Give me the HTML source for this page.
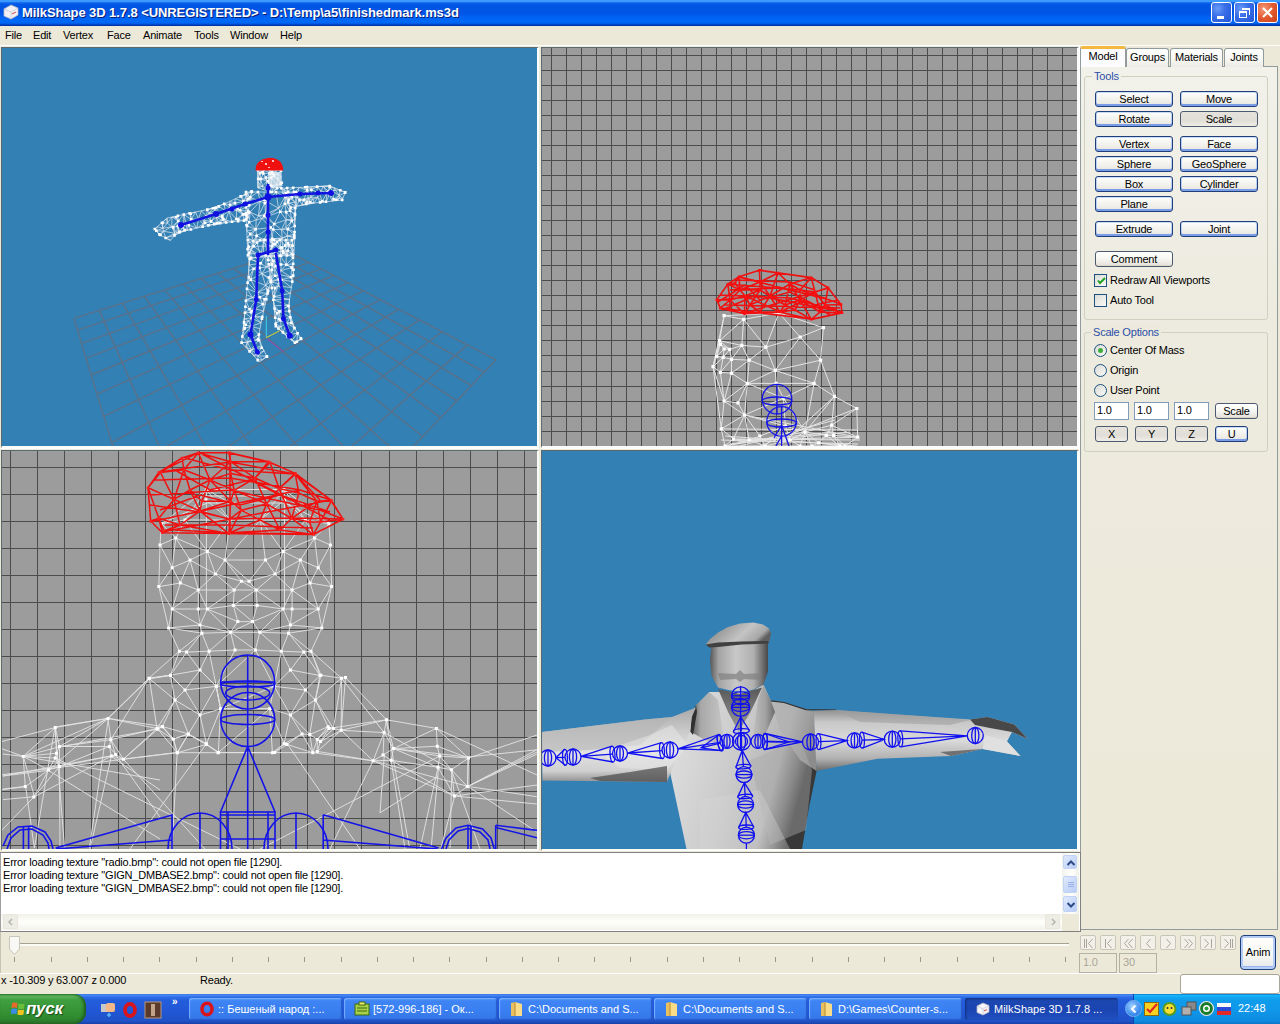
<!DOCTYPE html>
<html><head><meta charset="utf-8">
<style>
*{margin:0;padding:0;box-sizing:border-box}
html,body{width:1280px;height:1024px;overflow:hidden;background:#ECE9D8;font-family:"Liberation Sans",sans-serif;font-size:11px;color:#000;letter-spacing:-0.2px}
.a{position:absolute}
#title{left:0;top:0;width:1280px;height:26px;background:linear-gradient(to bottom,#3D9CFF 0,#3A98FF 1.5px,#1C70F0 2.5px,#0058E6 4px,#0054E3 8px,#0056E8 14px,#0062F2 17px,#006AF8 22px,#0058E0 24px,#0036B4 25px,#0030A8 26px)}
#title .t{left:22px;top:5px;color:#fff;font-weight:bold;font-size:13px;letter-spacing:-0.08px;text-shadow:1px 1px 0 #0A1E7A}
.tb{top:2px;width:21px;height:21px;border:1px solid #fff;border-radius:3px;background:radial-gradient(circle at 30% 30%,#6A9CF7 0,#3A6FE8 40%,#1F56D8 100%)}
.tb.c{background:radial-gradient(circle at 30% 30%,#F29A7A 0,#E35A30 50%,#C8401C 100%)}
#menu{left:0;top:26px;width:1280px;height:20px;background:#ECE9D8}
#menu span{position:absolute;top:3px}
.vp{position:absolute;overflow:hidden}
.btn{position:absolute;height:16px;border:1px solid #1E3F7A;border-radius:3px;background:linear-gradient(to bottom,#FFFFFF 0,#F4F4F0 40%,#ECEBE6 80%,#D6D0C5 100%);text-align:center;line-height:15px;font-size:11px;box-shadow:inset 0 -2px 0 #7B9CE6,inset 0 1px 0 #CADCF8,inset 1px 0 0 #BCD0F4,inset -1px 0 0 #BCD0F4}
.btn.g{border-color:#4C5A70;background:linear-gradient(to bottom,#E4E2DA 0,#E0DED6 60%,#F0EEE8 100%);box-shadow:none}
.btn.n{border-color:#4C5A70;box-shadow:none;background:linear-gradient(to bottom,#FFFFFF 0,#F6F6F2 50%,#E6E4DC 90%,#D6D0C5 100%)}
.tab{position:absolute;top:48px;height:19px;border:1px solid #919B9C;border-bottom:none;border-radius:3px 3px 0 0;background:linear-gradient(to bottom,#FFFFFF 0,#F6F6F2 60%,#ECEBE5 100%);text-align:center;line-height:17px}
.gb{position:absolute;border:1px solid #D0D0BF;border-radius:3px}
.gbl{position:absolute;background:#F5F4EA;color:#2A4EA8;padding:0 2px}
.chk{position:absolute;width:13px;height:13px;border:1px solid #1C5180;background:linear-gradient(135deg,#DCDCD7 0,#F8F8F6 100%)}
.rad{position:absolute;width:13px;height:13px;border:1px solid #1C5180;border-radius:50%;background:linear-gradient(135deg,#DCDCD7 0,#F8F8F6 100%)}
.lbl{position:absolute}
.edit{position:absolute;border:1px solid #7F9DB9;background:#fff;padding-left:2px;line-height:14px}
</style></head><body>
<div id="title" class="a">
 <svg class="a" style="left:2px;top:3px" width="18" height="18" viewBox="0 0 18 18">
  <path d="M2 6 L9 2 L16 5 L16 12 L9 16 L2 13 Z" fill="#F2F2F6" stroke="#B8B8C8" stroke-width="0.8"/>
  <path d="M2 6 L9 9 L16 5 M9 9 L9 16" fill="none" stroke="#C8C8D8" stroke-width="0.8"/>
  <path d="M10 11 L14 9" stroke="#D06060" stroke-width="1.2"/>
 </svg>
 <div class="a t">MilkShape 3D 1.7.8 &lt;UNREGISTERED&gt; - D:\Temp\a5\finishedmark.ms3d</div>
 <div class="a tb" style="left:1211px"><div class="a" style="left:5px;top:13px;width:7px;height:3px;background:#fff"></div></div>
 <div class="a tb" style="left:1234px"><div class="a" style="left:4px;top:8px;width:8px;height:7px;border:1px solid #fff;border-top-width:2px"></div><div class="a" style="left:7px;top:5px;width:8px;height:7px;border:1px solid #fff;border-top-width:2px;border-left:none;border-bottom:none"></div></div>
 <div class="a tb c" style="left:1257px"><svg class="a" style="left:0;top:0" width="19" height="19"><path d="M5 5 L14 14 M14 5 L5 14" stroke="#fff" stroke-width="2"/></svg></div>
</div>
<div id="menu" class="a">
 <span style="left:5px">File</span><span style="left:33px">Edit</span><span style="left:63px">Vertex</span><span style="left:107px">Face</span><span style="left:143px">Animate</span><span style="left:194px">Tools</span><span style="left:230px">Window</span><span style="left:280px">Help</span>
</div>
<div class="a" style="left:0;top:45px;width:1280px;height:1px;background:#FDFDF8"></div>
<div class="a" style="left:0px;top:45px;width:539px;height:403px;border-top:1px solid #FFFFFF;"></div><div class="a" style="left:1px;top:47px;width:538px;height:401px;border-top:1px solid #5A6A70;border-left:1px solid #5A6A70;border-right:2px solid #FAFCFA;border-bottom:2px solid #FAFCFA"></div><svg class="a" style="left:2px;top:48px;background:#3380B5" width="535" height="398" viewBox="0 0 535 398" shape-rendering="auto"><path d="M285.5 203.4L71.9 270.4M285.5 203.4L494.1 311.8M295.8 208.8L75.5 282.1M273.1 207.3L482.3 324.1M306.9 214.6L79.5 295.3M260.1 211.4L469.3 337.7M318.9 220.8L84.0 310.2M246.2 215.8L454.9 352.8M331.9 227.5L89.1 327.0M231.5 220.4L438.8 369.6M346.0 234.9L95.0 346.2M215.9 225.2L420.7 388.5M361.4 242.9L101.8 368.4M199.3 230.4L400.2 409.9M378.2 251.6L109.7 394.4M181.6 236.0L376.8 434.3M396.8 261.2L119.0 425.1M162.7 241.9L349.9 462.5M417.3 271.9L130.3 461.9M142.4 248.3L318.5 495.2M440.0 283.7L144.0 507.0M120.6 255.1L281.6 533.8M465.5 296.9L161.2 563.5M97.2 262.4L237.3 580.0M494.1 311.8L183.4 636.3M71.9 270.4L183.4 636.3" stroke="#5A7088" stroke-width="1.4" fill="none"/><g transform="translate(-2,-48)"><path d="M251.5 191.4L215.6 207.8L167.2 218.0L154.7 229.0L159.4 234.4L170.3 240.6L176.6 232.8L217.2 223.4L246.9 220.3L251.5 191.4Z" fill="#3380B5"/><path d="M281.2 188.3L329.7 186.0L345.3 192.2L342.2 200.0L306.2 203.9L290.6 207.8L281.2 188.3Z" fill="#3380B5"/><path d="M246.0 192.0L296.0 192.0L295.0 215.0L294.0 255.0L248.0 258.0L246.0 215.0L246.0 192.0Z" fill="#3380B5"/><path d="M257.8 170.0L281.0 170.0L282.0 186.0L272.0 192.0L258.0 188.0L257.8 170.0Z" fill="#3380B5"/><path d="M248.0 240.0L272.0 240.0L272.0 278.0L268.2 290.8L261.9 318.7L258.0 339.0L267.0 356.7L259.3 361.8L241.6 342.8L244.0 322.5L246.0 299.6L249.8 259.0L248.0 240.0Z" fill="#3380B5"/><path d="M268.0 240.0L292.3 240.0L293.6 273.0L288.5 306.0L291.0 322.5L301.2 339.0L294.9 342.8L275.8 326.3L274.6 308.5L270.8 280.6L268.0 260.0L268.0 240.0Z" fill="#3380B5"/><path d="M202.6 226.8L205.0 222.9M172.0 217.0L171.7 226.8M183.8 214.5L183.8 224.8M248.3 211.3L247.5 215.2M247.4 217.2L248.3 211.3M186.3 224.2L187.1 230.2M239.9 210.3L237.5 208.5M208.8 213.4L215.2 210.2M238.3 219.6L236.4 219.0M195.5 212.0L190.7 213.7M226.2 222.5L232.1 221.8M248.3 211.3L246.1 214.2M198.5 218.9L203.1 224.0M240.6 196.4L243.5 201.4M230.1 204.7L235.0 203.1M179.2 232.2L179.6 231.9M225.2 210.5L222.3 215.9M179.6 231.9L182.8 227.3M218.0 221.7L215.7 223.6M215.6 207.8L218.8 206.4M176.6 232.8L177.8 226.1M173.2 227.4L174.9 233.3M157.4 226.6L162.8 228.3M172.0 217.0L167.4 223.1M232.1 221.8L238.1 221.2M226.2 222.5L225.9 220.0M201.4 210.8L195.5 212.0M218.8 206.4L215.6 213.4M203.9 220.3L203.1 224.0M160.5 235.0L163.5 231.2M195.5 212.0L198.5 218.9M222.3 215.9L216.5 217.1M228.9 211.1L225.9 220.0M249.3 205.3L239.9 210.3M224.2 203.9L218.8 206.4M198.5 218.9L206.6 216.2M190.9 229.5L187.1 230.2M170.3 240.6L170.8 240.0M215.3 215.7L215.6 213.4M177.8 226.1L183.8 224.8M226.2 222.5L221.6 220.2M218.8 206.4L213.1 208.3M203.9 220.3L206.6 216.2M172.0 217.0L178.2 221.0M218.0 221.7L216.5 217.1M244.2 214.3L239.9 210.3M247.4 217.2L246.2 215.6M238.1 221.2L244.1 220.6M229.5 207.6L225.2 210.5M186.3 224.2L182.8 227.3M228.9 211.1L222.3 215.9M190.7 213.7L191.2 219.4M208.4 225.4L211.1 221.4M214.3 224.1L220.2 223.1M224.2 203.9L207.3 209.6M174.5 235.4L185.1 230.8M167.2 218.0L167.4 223.1M154.7 229.0L157.4 226.6M183.8 224.8L186.3 224.2M229.7 201.4L230.1 204.7M244.2 214.3L242.8 214.5M243.5 201.4L242.4 195.7M228.9 211.1L236.4 219.0M187.1 230.2L182.8 227.3M218.8 206.4L215.2 210.2M161.9 222.7L162.5 222.9M213.1 208.3L207.3 209.6M238.1 221.2L236.4 219.0M236.6 210.4L229.5 207.6M246.9 220.3L244.1 220.6M188.8 225.1L186.3 224.2M186.3 224.2L191.2 219.4M247.5 215.2L246.2 215.6M190.9 229.5L188.8 225.1M215.2 210.2L215.6 213.4M226.2 222.5L223.3 219.5M235.1 198.9L229.7 201.4M242.8 214.5L236.4 219.0M177.9 215.7L172.0 217.0M163.5 231.2L171.7 226.8M235.1 198.9L235.0 203.1M159.4 234.4L156.3 230.8M162.5 222.9L162.8 228.3M242.8 214.5L238.3 219.6M229.7 201.4L224.2 203.9M248.3 211.3L249.3 205.3M195.5 212.0L191.2 219.4M228.9 211.1L236.6 210.4M222.3 215.9L215.6 213.4M251.5 191.4L246.6 195.6M242.4 195.7L246.6 195.6M224.2 203.9L230.1 204.7M215.7 223.6L216.5 217.1M165.7 238.0L174.5 235.4M249.3 205.3L250.2 199.4M236.6 210.4L239.9 210.3M224.2 203.9L225.2 210.5M178.2 221.0L176.1 217.3M244.1 220.6L242.8 214.5M183.8 214.5L191.2 219.4M248.3 211.3L239.9 210.3M225.9 220.0L222.2 217.0M174.5 235.4L174.9 233.3M179.2 232.2L177.8 226.1M172.0 217.0L176.1 217.3M247.4 217.2L247.5 215.2M221.6 220.2L223.3 219.5M196.8 228.1L188.8 225.1M195.5 212.0L189.6 213.3M208.8 213.4L206.6 216.2M166.4 218.7L161.9 222.7M246.0 193.9L242.4 195.7M236.6 210.4L242.8 214.5M202.6 226.8L203.1 224.0M156.3 230.8L163.5 231.2M208.4 225.4L205.0 222.9M222.3 215.9L222.2 217.0M211.1 221.4L206.6 216.2M177.8 226.1L182.8 227.3M242.8 214.5L246.2 215.6M207.3 209.6L208.8 213.4M189.6 213.3L183.8 214.5M188.8 225.1L187.1 230.2M176.6 232.8L174.5 235.4M173.2 227.4L177.8 226.1M217.2 223.4L220.2 223.1M203.9 220.3L211.1 221.4M165.7 238.0L163.5 231.2M201.4 210.8L198.5 218.9M185.1 230.8L179.6 231.9M222.2 217.0L216.5 217.1M243.5 201.4L246.6 195.6M215.6 207.8L213.1 208.3M205.0 222.9L203.1 224.0M185.1 230.8L184.6 230.3M170.8 240.0L174.5 235.4M161.9 222.7L157.4 226.6M167.2 218.0L166.4 218.7M247.5 215.2L246.1 214.2M185.1 230.8L187.1 230.2M224.2 203.9L229.5 207.6M157.4 226.6L156.3 230.8M230.1 204.7L229.5 207.6M183.8 214.5L177.9 215.7M232.1 221.8L228.9 211.1M174.5 235.4L179.2 232.2M225.9 220.0L223.3 219.5M196.8 228.1L198.5 218.9M173.2 227.4L171.7 226.8M238.1 221.2L238.3 219.6M207.3 209.6L201.4 210.8M183.8 224.8L182.8 227.3M215.6 207.8L215.2 210.2M166.4 218.7L162.5 222.9M208.4 225.4L220.2 223.1M211.1 221.4L215.7 223.6M251.5 191.4L250.2 199.4M244.2 214.3L246.2 215.6M165.7 238.0L174.9 233.3M179.6 231.9L184.6 230.3M243.5 201.4L239.9 210.3M167.4 223.1L162.8 228.3M244.1 220.6L238.3 219.6M217.2 223.4L218.0 221.7M236.6 210.4L236.4 219.0M160.5 235.0L165.7 238.0M221.6 220.2L216.5 217.1M213.1 208.3L215.2 210.2M225.2 210.5L215.6 213.4M207.3 209.6L206.6 216.2M189.6 213.3L190.7 213.7M246.0 193.9L246.6 195.6M183.8 214.5L178.2 221.0M246.9 220.3L247.4 217.2M211.1 221.4L216.5 217.1M235.1 198.9L243.5 201.4M203.9 220.3L205.0 222.9M171.7 226.8L174.9 233.3M165.7 238.0L170.8 240.0M183.8 214.5L186.3 224.2M225.9 220.0L222.3 215.9M214.3 224.1L215.7 223.6M228.9 211.1L225.2 210.5M173.2 227.4L178.2 221.0M208.8 213.4L211.1 221.4M176.6 232.8L174.9 233.3M159.4 234.4L160.5 235.0M215.6 213.4L216.5 217.1M156.3 230.8L162.8 228.3M208.8 213.4L215.3 215.7M236.6 210.4L237.5 208.5M232.1 221.8L225.9 220.0M166.4 218.7L167.4 223.1M220.2 223.1L218.0 221.7M170.3 240.6L165.7 238.0M211.1 221.4L215.3 215.7M161.9 222.7L162.8 228.3M220.2 223.1L221.6 220.2M177.9 215.7L178.2 221.0M244.1 220.6L246.2 215.6M178.2 221.0L183.8 224.8M154.7 229.0L159.4 234.4M198.5 218.9L191.2 219.4M196.8 228.1L191.2 219.4M196.8 228.1L202.6 226.8M235.0 203.1L237.5 208.5M229.5 207.6L237.5 208.5M217.2 223.4L214.3 224.1M218.0 221.7L221.6 220.2M201.4 210.8L206.6 216.2M243.5 201.4L235.0 203.1M196.8 228.1L203.1 224.0M213.1 208.3L208.8 213.4M202.6 226.8L208.4 225.4M249.3 205.3L243.5 201.4M248.3 211.3L244.2 214.3M176.6 232.8L173.2 227.4M171.7 226.8L162.8 228.3M184.6 230.3L187.1 230.2M240.6 196.4L242.4 195.7M214.3 224.1L211.1 221.4M167.2 218.0L172.0 217.0M218.8 206.4L207.3 209.6M159.4 234.4L163.5 231.2M163.5 231.2L174.9 233.3M232.1 221.8L236.4 219.0M179.2 232.2L185.1 230.8M228.9 211.1L229.5 207.6M244.2 214.3L246.1 214.2M205.0 222.9L211.1 221.4M176.6 232.8L179.2 232.2M223.3 219.5L222.2 217.0M229.5 207.6L235.0 203.1M167.4 223.1L162.5 222.9M208.8 213.4L215.6 213.4M198.5 218.9L203.9 220.3M246.0 193.9L240.6 196.4M154.7 229.0L156.3 230.8M251.5 191.4L246.0 193.9M208.4 225.4L214.3 224.1M178.2 221.0L177.8 226.1M215.3 215.7L216.5 217.1M229.7 201.4L235.0 203.1M185.1 230.8L190.9 229.5M244.1 220.6L247.4 217.2M217.2 223.4L215.7 223.6M188.8 225.1L191.2 219.4M250.2 199.4L243.5 201.4M167.4 223.1L171.7 226.8M220.2 223.1L226.2 222.5M189.6 213.3L191.2 219.4M221.6 220.2L222.2 217.0M190.9 229.5L196.8 228.1M240.6 196.4L235.1 198.9M177.9 215.7L176.1 217.3M250.2 199.4L246.6 195.6M163.5 231.2L162.8 228.3M177.8 226.1L179.6 231.9M243.5 201.4L237.5 208.5M208.4 225.4L226.2 222.5M246.1 214.2L246.2 215.6M178.2 221.0L171.7 226.8M242.8 214.5L239.9 210.3M184.6 230.3L182.8 227.3M218.8 206.4L225.2 210.5" stroke="#E8ECF0" stroke-width="0.8" fill="none" opacity="0.85"/><path d="M214.3 206.5h2.6v2.6h-2.6zM153.4 227.7h2.6v2.6h-2.6zM158.1 233.1h2.6v2.6h-2.6zM215.9 222.1h2.6v2.6h-2.6zM250.2 190.1h2.6v2.6h-2.6zM244.7 192.6h2.6v2.6h-2.6zM239.3 195.1h2.6v2.6h-2.6zM222.9 202.6h2.6v2.6h-2.6zM217.5 205.1h2.6v2.6h-2.6zM211.8 207.0h2.6v2.6h-2.6zM206.0 208.3h2.6v2.6h-2.6zM188.3 212.0h2.6v2.6h-2.6zM182.5 213.2h2.6v2.6h-2.6zM176.6 214.4h2.6v2.6h-2.6zM160.6 221.4h2.6v2.6h-2.6zM155.0 229.5h2.6v2.6h-2.6zM159.2 233.7h2.6v2.6h-2.6zM164.4 236.7h2.6v2.6h-2.6zM173.2 234.1h2.6v2.6h-2.6zM177.9 230.9h2.6v2.6h-2.6zM189.6 228.2h2.6v2.6h-2.6zM201.3 225.5h2.6v2.6h-2.6zM207.1 224.1h2.6v2.6h-2.6zM213.0 222.8h2.6v2.6h-2.6zM218.9 221.8h2.6v2.6h-2.6zM224.9 221.2h2.6v2.6h-2.6zM230.8 220.5h2.6v2.6h-2.6zM236.8 219.9h2.6v2.6h-2.6zM242.8 219.3h2.6v2.6h-2.6zM246.1 215.9h2.6v2.6h-2.6zM247.0 210.0h2.6v2.6h-2.6zM248.0 204.0h2.6v2.6h-2.6zM242.9 213.0h2.6v2.6h-2.6zM203.7 221.6h2.6v2.6h-2.6zM241.5 213.2h2.6v2.6h-2.6zM228.8 203.4h2.6v2.6h-2.6zM171.9 226.1h2.6v2.6h-2.6zM176.9 219.7h2.6v2.6h-2.6zM189.4 212.4h2.6v2.6h-2.6zM176.5 224.8h2.6v2.6h-2.6zM178.3 230.6h2.6v2.6h-2.6zM242.2 200.1h2.6v2.6h-2.6zM187.5 223.8h2.6v2.6h-2.6zM237.0 218.3h2.6v2.6h-2.6zM209.8 220.1h2.6v2.6h-2.6zM161.2 221.6h2.6v2.6h-2.6zM221.0 214.6h2.6v2.6h-2.6zM182.5 223.5h2.6v2.6h-2.6zM238.6 209.0h2.6v2.6h-2.6zM222.0 218.2h2.6v2.6h-2.6zM183.3 229.0h2.6v2.6h-2.6zM233.7 201.8h2.6v2.6h-2.6zM214.3 212.1h2.6v2.6h-2.6zM220.9 215.7h2.6v2.6h-2.6zM189.9 218.1h2.6v2.6h-2.6zM244.8 212.9h2.6v2.6h-2.6zM236.2 207.2h2.6v2.6h-2.6zM174.8 216.0h2.6v2.6h-2.6zM181.5 226.0h2.6v2.6h-2.6zM235.1 217.7h2.6v2.6h-2.6zM205.3 214.9h2.6v2.6h-2.6z" fill="#FFFFFF"/><path d="M319.5 194.0L317.1 192.2M305.2 187.2L307.2 190.3M308.1 203.7L310.3 202.1M317.7 197.6L322.4 201.3M323.2 186.3L321.2 191.1M339.3 198.0L339.2 195.4M321.2 191.1L317.1 192.2M293.2 187.7L299.2 187.4M314.1 203.0L302.3 204.9M311.2 186.9L329.1 186.0M290.6 207.8L288.0 202.4M320.1 202.4L317.7 197.6M285.7 193.4L283.9 189.4M306.2 203.9L307.2 201.8M317.2 186.6L311.4 189.7M329.7 186.0L334.8 188.0M334.8 188.0L335.3 190.0M293.2 187.7L293.7 194.2M339.2 195.4L333.6 199.2M302.3 204.9L302.9 200.4M311.1 197.2L317.1 192.2M329.7 186.0L329.9 187.0M299.2 187.4L305.2 187.2M281.2 188.3L287.2 188.0M332.8 191.6L328.6 191.6M296.4 206.3L296.8 197.4M306.2 203.9L304.0 199.9M329.1 186.0L329.9 187.0M334.8 188.0L340.3 190.2M338.0 200.5L339.3 198.0M305.2 187.2L306.9 187.1M308.8 199.1L310.3 202.1M293.7 194.2L287.5 191.5M302.9 200.4L296.8 197.4M306.2 203.9L302.3 204.9M323.2 186.3L327.1 192.5M306.2 203.9L302.9 200.4M340.3 190.2L345.1 192.8M336.4 199.7L339.3 198.0M311.1 197.2L307.2 190.3M307.2 190.3L296.8 197.4M299.5 200.3L296.8 197.4M311.1 197.2L311.4 189.7M317.2 186.6L323.2 186.3M288.0 202.4L288.6 199.6M320.1 202.4L314.1 203.0M342.2 200.0L338.0 200.5M287.5 191.5L283.9 189.4M323.2 186.3L329.1 186.0M338.0 200.5L336.4 199.7M306.9 187.1L311.4 189.7M322.4 201.3L319.5 194.0M336.4 199.7L339.2 195.4M311.1 197.2L308.2 197.5M299.2 187.4L296.8 197.4M281.2 188.3L283.9 189.4M307.2 201.8L304.0 199.9M285.4 197.0L285.7 193.4M314.1 203.0L308.1 203.7M308.8 199.1L307.1 199.1M314.1 203.0L310.3 202.1M285.7 193.4L287.5 191.5M291.8 197.2L296.8 197.4M317.2 186.6L321.2 191.1M326.0 201.8L322.4 201.3M332.8 191.6L339.2 195.4M338.0 200.5L332.0 201.1M329.7 186.0L329.1 186.0M308.1 203.7L302.3 204.9M319.5 194.0L327.1 192.5M336.4 199.7L333.6 199.2M327.1 192.5L329.6 194.5M332.0 201.1L326.0 201.8M311.2 186.9L311.4 189.7M323.2 186.3L328.6 191.6M304.0 199.9L296.8 197.4M314.1 203.0L296.4 206.3M328.6 191.6L327.1 192.5M308.8 199.1L307.2 201.8M291.8 197.2L288.6 199.6M332.8 191.6L333.6 199.2M314.1 203.0L317.7 197.6M307.2 190.3L304.0 199.9M311.1 197.2L308.8 199.1M332.0 201.1L329.6 194.5M302.3 204.9L296.4 206.3M293.2 187.7L287.5 191.5M299.2 187.4L293.7 194.2M296.4 206.3L290.6 207.8M345.1 192.8L339.2 195.4M326.0 201.8L320.1 202.4M308.1 203.7L307.2 201.8M285.4 197.0L291.8 197.2M328.6 191.6L329.9 187.0M291.8 197.2L293.7 194.2M335.3 190.0L339.2 195.4M306.2 203.9L308.1 203.7M302.3 204.9L299.5 200.3M342.8 198.4L339.3 198.0M345.1 192.8L342.8 198.4M290.6 207.8L288.0 202.4M287.2 188.0L283.9 189.4M307.1 199.1L307.2 201.8M345.3 192.2L345.1 192.8M307.2 190.3L311.4 189.7M308.8 199.1L313.0 199.3M281.2 188.3L285.4 197.0M329.1 186.0L328.6 191.6M311.2 186.9L306.9 187.1M311.4 189.7L317.1 192.2M342.2 200.0L342.8 198.4M334.8 188.0L332.8 191.6M317.7 197.6L313.0 199.3M310.3 202.1L313.0 199.3M296.4 206.3L299.5 200.3M290.6 207.8L290.6 207.8M288.0 202.4L285.4 197.0M293.7 194.2L296.8 197.4M342.8 198.4L339.2 195.4M307.1 199.1L304.0 199.9M307.2 190.3L308.2 197.5M299.2 187.4L307.2 190.3M311.1 197.2L317.7 197.6M281.2 188.3L285.7 193.4M335.3 190.0L332.8 191.6M317.2 186.6L329.1 186.0M329.6 194.5L333.6 199.2M302.9 200.4L299.5 200.3M321.2 191.1L327.1 192.5M317.7 197.6L319.5 194.0M307.2 190.3L306.9 187.1M320.1 202.4L322.4 201.3M314.1 203.0L313.0 199.3M342.2 200.0L339.3 198.0M304.0 199.9L302.9 200.4M310.3 202.1L307.2 201.8M340.3 190.2L335.3 190.0M317.7 197.6L317.1 192.2M334.8 188.0L329.9 187.0M328.6 191.6L329.6 194.5M322.4 201.3L327.1 192.5M326.0 201.8L327.1 192.5M307.1 199.1L308.2 197.5M296.4 206.3L291.8 197.2M304.0 199.9L308.2 197.5M287.2 188.0L287.5 191.5M305.2 187.2L311.2 186.9M340.3 190.2L339.2 195.4M345.3 192.2L340.3 190.2M288.0 202.4L291.8 197.2M285.4 197.0L288.6 199.6M326.0 201.8L329.6 194.5M317.2 186.6L317.1 192.2M296.4 206.3L288.0 202.4M291.8 197.2L285.7 193.4M311.1 197.2L313.0 199.3M321.2 191.1L319.5 194.0M291.8 197.2L287.5 191.5M332.0 201.1L336.4 199.7M332.8 191.6L329.9 187.0M311.2 186.9L317.2 186.6M332.8 191.6L329.6 194.5M308.8 199.1L308.2 197.5M332.0 201.1L333.6 199.2M287.2 188.0L293.2 187.7" stroke="#E8ECF0" stroke-width="0.8" fill="none" opacity="0.85"/><path d="M279.9 187.0h2.6v2.6h-2.6zM328.4 184.7h2.6v2.6h-2.6zM344.0 190.9h2.6v2.6h-2.6zM340.9 198.7h2.6v2.6h-2.6zM304.9 202.6h2.6v2.6h-2.6zM289.3 206.5h2.6v2.6h-2.6zM285.9 186.7h2.6v2.6h-2.6zM291.9 186.4h2.6v2.6h-2.6zM303.9 185.9h2.6v2.6h-2.6zM315.9 185.3h2.6v2.6h-2.6zM339.0 188.9h2.6v2.6h-2.6zM343.8 191.5h2.6v2.6h-2.6zM324.7 200.5h2.6v2.6h-2.6zM318.8 201.1h2.6v2.6h-2.6zM286.7 201.1h2.6v2.6h-2.6zM284.1 195.7h2.6v2.6h-2.6zM309.0 200.8h2.6v2.6h-2.6zM305.9 189.0h2.6v2.6h-2.6zM290.5 195.9h2.6v2.6h-2.6zM335.1 198.4h2.6v2.6h-2.6zM331.5 190.3h2.6v2.6h-2.6zM305.9 200.5h2.6v2.6h-2.6zM284.4 192.1h2.6v2.6h-2.6zM302.7 198.6h2.6v2.6h-2.6zM321.1 200.0h2.6v2.6h-2.6zM327.3 190.3h2.6v2.6h-2.6zM305.6 185.8h2.6v2.6h-2.6zM292.4 192.9h2.6v2.6h-2.6zM328.6 185.7h2.6v2.6h-2.6zM310.1 188.4h2.6v2.6h-2.6zM298.2 199.0h2.6v2.6h-2.6zM315.8 190.9h2.6v2.6h-2.6zM325.8 191.2h2.6v2.6h-2.6zM328.3 193.2h2.6v2.6h-2.6zM332.3 197.9h2.6v2.6h-2.6zM287.3 198.3h2.6v2.6h-2.6z" fill="#FFFFFF"/><path d="M294.1 250.0L288.7 245.2M247.9 255.1L250.9 249.8M258.0 192.0L264.3 199.7M265.7 214.3L267.0 201.6M274.2 224.0L273.2 229.5M246.8 231.2L247.1 226.0M286.2 196.2L284.8 203.8M258.0 192.0L264.0 192.0M264.3 199.7L267.0 201.6M250.1 212.1L258.4 215.9M281.5 229.6L286.1 219.8M267.4 216.4L264.3 216.0M246.0 213.2L246.0 207.2M246.2 219.2L250.1 212.1M246.2 219.2L249.0 212.4M291.7 220.9L291.7 219.1M255.7 229.2L247.1 226.0M283.3 252.8L282.9 251.3M249.9 197.5L250.2 197.4M282.0 238.7L272.2 238.9M273.3 244.0L272.2 238.9M296.0 192.0L295.8 196.0M246.0 207.2L249.0 212.4M260.1 201.4L258.4 215.9M246.0 207.2L246.0 201.2M281.1 255.8L283.3 252.8M295.0 214.0L294.9 220.0M256.7 235.7L263.9 239.9M246.0 207.2L250.1 212.1M281.5 229.6L287.8 229.1M267.4 216.4L274.2 224.0M278.5 208.2L284.8 203.8M274.2 224.0L265.8 217.6M255.7 229.2L249.1 222.3M295.3 208.0L290.0 210.6M294.0 192.0L295.8 196.0M294.4 238.0L294.4 236.4M264.0 192.0L270.0 192.0M294.0 255.0L294.1 250.0M246.0 192.0L252.0 192.0M258.0 192.0L250.2 197.4M294.4 236.4L287.3 236.0M248.0 258.0L251.1 257.8M256.7 235.7L270.7 227.5M294.7 226.0L291.7 220.9M246.0 215.0L246.2 219.2M284.8 197.0L286.2 196.2M260.1 201.4L264.3 199.7M295.8 196.0L295.6 202.0M250.1 212.1L249.1 222.3M274.2 224.0L280.3 211.7M270.0 192.0L267.0 201.6M287.0 255.5L287.7 250.7M246.0 192.0L249.9 197.5M263.9 239.9L272.1 242.5M250.9 249.8L253.2 241.2M258.4 215.9L264.8 203.1M246.8 231.2L255.7 229.2M246.5 225.2L246.2 219.2M281.5 229.6L287.3 236.0M274.2 224.0L270.7 227.5M256.2 220.0L249.1 222.3M250.9 249.8L260.6 256.0M291.9 254.0L292.7 251.1M269.1 256.6L263.9 239.9M290.0 210.6L284.8 203.8M267.4 216.4L278.5 208.2M295.8 196.0L286.2 196.2M283.3 252.8L287.7 250.7M295.0 214.0L290.0 210.6M295.6 202.0L295.3 208.0M255.7 229.2L256.2 220.0M260.1 201.4L250.2 197.4M272.1 242.5L272.2 238.9M281.5 229.6L273.2 229.5M265.8 217.6L270.7 227.5M295.6 202.0L284.8 203.8M282.0 192.0L288.0 192.0M250.9 249.8L257.0 242.5M261.9 218.4L258.4 215.9M294.4 238.0L294.3 244.0M247.0 237.2L250.2 233.9M294.4 238.0L287.3 236.0M287.0 255.5L291.9 254.0M291.7 220.9L286.1 219.8M292.7 251.1L288.7 245.2M282.0 192.0L284.8 197.0M288.0 192.0L294.0 192.0M282.2 237.8L282.0 238.7M247.1 226.0L249.1 222.3M247.3 243.1L253.2 241.2M247.0 237.2L251.7 234.8M282.9 251.3L288.7 245.2M246.0 201.2L247.8 199.2M263.1 257.0L263.9 239.9M249.9 197.5L247.8 199.2M280.3 211.7L284.8 203.8M261.9 218.4L265.8 217.6M291.7 220.9L287.8 229.1M294.3 244.0L294.1 250.0M291.7 219.1L286.1 219.8M294.3 244.0L288.7 245.2M250.2 233.9L251.7 234.8M294.9 220.0L294.7 226.0M282.2 237.8L287.3 236.0M296.0 192.0L294.0 192.0M295.0 215.0L291.7 219.1M294.7 226.0L287.8 229.1M281.5 229.6L285.9 227.7M258.4 215.9L265.7 214.3M280.3 211.7L286.1 219.8M265.7 214.3L264.8 203.1M264.0 192.0L264.3 199.7M294.7 226.0L294.6 232.0M246.0 207.2L260.1 201.4M246.5 225.2L249.1 222.3M256.7 235.7L255.7 229.2M246.0 213.2L249.0 212.4M287.0 255.5L283.3 252.8M287.8 229.1L293.9 234.3M282.2 237.8L273.2 229.5M261.9 218.4L270.7 227.5M286.2 212.1L291.7 219.1M257.0 242.5L260.6 256.0M288.0 192.0L286.2 196.2M294.9 220.0L291.7 219.1M263.1 257.0L257.1 257.4M278.5 208.2L265.7 214.3M252.0 192.0L250.2 197.4M293.0 255.1L287.0 255.5M274.2 224.0L281.5 229.6M250.9 249.8L254.8 242.1M282.9 251.3L275.2 252.0M269.1 256.6L272.1 242.5M263.9 239.9L257.0 242.5M287.0 255.5L281.1 255.8M294.6 232.0L294.4 238.0M257.1 257.4L251.1 257.8M257.1 257.4L260.6 256.0M294.0 255.0L293.0 255.1M295.3 208.0L295.0 214.0M260.1 201.4L247.8 199.2M248.0 258.0L247.9 255.1M281.1 255.8L275.1 256.2M246.0 192.0L250.2 197.4M282.2 237.8L272.2 238.9M282.0 238.7L288.7 245.2M282.9 251.3L282.0 238.7M281.1 255.8L275.2 252.0M250.1 212.1L256.2 220.0M276.0 192.0L267.0 201.6M269.1 256.6L273.3 244.0M246.0 192.0L247.8 199.2M251.1 257.8L250.9 249.8M294.0 192.0L286.2 196.2M294.3 235.0L293.9 234.3M287.3 236.0L288.7 245.2M269.1 256.6L275.2 252.0M281.1 255.8L282.9 251.3M256.7 235.7L253.2 241.2M295.3 208.0L294.7 226.0M286.2 212.1L284.8 203.8M247.6 249.1L250.9 249.8M273.3 244.0L272.1 242.5M267.0 201.6L264.8 203.1M275.1 256.2L269.1 256.6M295.0 215.0L294.9 220.0M295.6 202.0L286.2 196.2M288.7 245.2L287.7 250.7M246.5 225.2L247.1 226.0M250.1 212.1L249.0 212.4M284.8 197.0L278.5 208.2M294.0 255.0L291.9 254.0M294.6 232.0L294.3 235.0M276.0 192.0L284.8 197.0M269.1 256.6L263.1 257.0M291.7 220.9L285.9 227.7M261.9 218.4L264.3 216.0M294.3 235.0L294.4 236.4M294.6 232.0L293.9 234.3M287.3 236.0L293.9 234.3M287.8 229.1L287.3 236.0M267.4 216.4L265.8 217.6M256.7 235.7L257.0 242.5M264.3 199.7L264.8 203.1M263.9 239.9L260.6 256.0M294.1 250.0L292.7 251.1M286.2 212.1L286.1 219.8M292.7 251.1L287.7 250.7M267.4 216.4L265.7 214.3M276.0 192.0L278.5 208.2M258.4 215.9L264.3 216.0M282.9 251.3L287.7 250.7M273.3 244.0L275.2 252.0M273.2 229.5L270.7 227.5M255.7 229.2L251.7 234.8M246.0 192.0L246.0 201.2M250.1 212.1L260.1 201.4M247.3 243.1L247.0 237.2M261.9 218.4L255.7 229.2M267.4 216.4L280.3 211.7M284.8 197.0L284.8 203.8M247.3 243.1L250.9 249.8M294.6 232.0L294.4 236.4M294.9 220.0L291.7 220.9M270.0 192.0L264.3 199.7M290.0 210.6L291.7 219.1M246.2 219.2L249.1 222.3M253.2 241.2L251.7 234.8M274.2 224.0L286.1 219.8M273.3 244.0L282.9 251.3M247.0 237.2L246.8 231.2M295.0 215.0L290.0 210.6M273.3 244.0L282.0 238.7M264.3 216.0L265.8 217.6M261.9 218.4L256.2 220.0M254.8 242.1L253.2 241.2M246.0 215.0L246.0 213.2M251.1 257.8L247.9 255.1M294.6 232.0L287.8 229.1M250.2 197.4L247.8 199.2M264.3 216.0L265.7 214.3M294.0 255.0L292.7 251.1M282.0 192.0L286.2 196.2M278.5 208.2L267.0 201.6M286.2 212.1L290.0 210.6M258.4 215.9L256.2 220.0M263.9 239.9L272.2 238.9M270.0 192.0L276.0 192.0M280.3 211.7L286.2 212.1M246.8 231.2L246.5 225.2M294.4 236.4L293.9 234.3M282.0 238.7L287.3 236.0M255.7 229.2L270.7 227.5M295.3 208.0L284.8 203.8M263.1 257.0L260.6 256.0M254.8 242.1L257.0 242.5M246.0 215.0L249.0 212.4M285.9 227.7L286.1 219.8M291.9 254.0L287.7 250.7M246.0 207.2L247.8 199.2M247.9 255.1L247.6 249.1M282.2 237.8L281.5 229.6M270.7 227.5L272.2 238.9M258.0 192.0L260.1 201.4M273.2 229.5L272.2 238.9M256.7 235.7L254.8 242.1M263.9 239.9L270.7 227.5M247.0 237.2L253.2 241.2M260.1 201.4L264.8 203.1M246.8 231.2L250.2 233.9M293.0 255.1L291.9 254.0M294.4 238.0L288.7 245.2M295.3 208.0L294.9 220.0M247.6 249.1L247.3 243.1M285.9 227.7L287.8 229.1M257.1 257.4L250.9 249.8M276.0 192.0L282.0 192.0M255.7 229.2L250.2 233.9M295.0 215.0L295.0 214.0M275.1 256.2L275.2 252.0M280.3 211.7L278.5 208.2M256.7 235.7L251.7 234.8M252.0 192.0L258.0 192.0" stroke="#E8ECF0" stroke-width="0.8" fill="none" opacity="0.85"/><path d="M244.7 190.7h2.6v2.6h-2.6zM294.7 190.7h2.6v2.6h-2.6zM293.7 213.7h2.6v2.6h-2.6zM244.7 213.7h2.6v2.6h-2.6zM244.7 190.7h2.6v2.6h-2.6zM250.7 190.7h2.6v2.6h-2.6zM256.7 190.7h2.6v2.6h-2.6zM268.7 190.7h2.6v2.6h-2.6zM274.7 190.7h2.6v2.6h-2.6zM286.7 190.7h2.6v2.6h-2.6zM292.7 190.7h2.6v2.6h-2.6zM294.0 206.7h2.6v2.6h-2.6zM293.7 212.7h2.6v2.6h-2.6zM293.4 224.7h2.6v2.6h-2.6zM293.3 230.7h2.6v2.6h-2.6zM293.1 236.7h2.6v2.6h-2.6zM291.7 253.8h2.6v2.6h-2.6zM285.7 254.2h2.6v2.6h-2.6zM279.8 254.5h2.6v2.6h-2.6zM273.8 254.9h2.6v2.6h-2.6zM255.8 256.1h2.6v2.6h-2.6zM249.8 256.5h2.6v2.6h-2.6zM246.6 253.8h2.6v2.6h-2.6zM246.3 247.8h2.6v2.6h-2.6zM245.2 223.9h2.6v2.6h-2.6zM244.9 217.9h2.6v2.6h-2.6zM244.7 211.9h2.6v2.6h-2.6zM244.7 205.9h2.6v2.6h-2.6zM282.0 251.5h2.6v2.6h-2.6zM248.6 196.2h2.6v2.6h-2.6zM272.9 222.7h2.6v2.6h-2.6zM279.0 210.4h2.6v2.6h-2.6zM255.4 234.4h2.6v2.6h-2.6zM262.6 238.6h2.6v2.6h-2.6zM263.0 198.4h2.6v2.6h-2.6zM290.6 252.7h2.6v2.6h-2.6zM290.4 219.6h2.6v2.6h-2.6zM284.9 210.8h2.6v2.6h-2.6zM263.0 214.7h2.6v2.6h-2.6zM254.4 227.9h2.6v2.6h-2.6zM286.5 227.8h2.6v2.6h-2.6zM288.7 209.3h2.6v2.6h-2.6zM245.8 224.7h2.6v2.6h-2.6zM271.9 228.2h2.6v2.6h-2.6zM293.0 233.7h2.6v2.6h-2.6zM272.0 242.7h2.6v2.6h-2.6zM248.9 196.1h2.6v2.6h-2.6zM281.6 250.0h2.6v2.6h-2.6zM248.9 232.6h2.6v2.6h-2.6zM251.9 239.9h2.6v2.6h-2.6zM255.7 241.2h2.6v2.6h-2.6zM264.4 213.0h2.6v2.6h-2.6zM293.1 235.1h2.6v2.6h-2.6zM269.4 226.2h2.6v2.6h-2.6zM287.4 243.9h2.6v2.6h-2.6zM286.4 249.4h2.6v2.6h-2.6zM270.9 237.6h2.6v2.6h-2.6zM265.7 200.3h2.6v2.6h-2.6zM263.5 201.8h2.6v2.6h-2.6zM247.7 211.1h2.6v2.6h-2.6zM283.5 202.5h2.6v2.6h-2.6zM247.8 221.0h2.6v2.6h-2.6zM273.9 250.7h2.6v2.6h-2.6zM246.5 197.9h2.6v2.6h-2.6z" fill="#FFFFFF"/><path d="M258.0 187.5L262.6 186.1M277.7 178.5L280.7 183.8M276.9 184.5L271.1 177.8M274.9 174.0L272.6 173.5M272.0 192.0L274.5 190.5M262.6 186.1L260.8 179.0M275.8 170.0L281.0 170.8M265.8 188.2L267.5 188.4M269.0 191.1L265.8 188.2M260.0 173.1L258.2 178.8M272.0 192.0L273.5 186.9M269.0 191.1L273.5 186.9M282.0 186.0L281.8 182.8M265.8 188.2L270.3 185.7M257.8 170.0L260.0 173.1M265.8 177.5L271.1 177.8M272.1 172.0L269.9 173.1M272.6 173.5L271.1 177.8M268.1 181.3L266.9 181.2M281.4 176.8L278.0 174.3M266.0 178.6L265.8 177.5M262.6 186.1L265.8 188.2M269.0 191.1L263.2 189.5M260.8 179.0L258.2 178.8M266.9 181.2L270.3 185.7M281.0 170.8L281.4 176.8M273.5 186.9L276.9 188.2M281.0 170.0L275.8 170.0M272.1 172.0L272.5 170.4M273.9 175.6L277.7 178.5M258.0 187.5L260.1 184.9M271.1 177.8L269.9 173.1M273.9 175.6L272.6 173.5M266.0 178.6L268.1 181.3M281.8 182.8L280.7 183.8M274.9 174.0L278.0 174.3M262.6 186.1L260.1 184.9M260.0 173.1L260.8 179.0M269.0 191.1L267.5 188.4M263.8 170.0L269.9 173.1M265.8 188.2L266.9 181.2M260.0 173.1L262.6 171.8M275.8 170.0L274.9 174.0M272.1 172.0L273.5 172.3M258.0 187.5L257.9 181.5M274.9 174.0L273.5 172.3M279.6 187.4L274.5 190.5M273.5 172.3L272.6 173.5M273.5 186.9L276.9 184.5M279.6 187.4L276.9 188.2M275.8 170.0L272.5 170.4M281.8 182.8L277.7 178.5M275.8 170.0L278.0 174.3M273.9 175.6L278.0 174.3M269.0 191.1L271.4 185.9M258.0 188.0L262.6 186.1M263.8 170.0L262.6 171.8M275.8 170.0L273.5 172.3M265.8 179.1L265.8 177.5M257.8 170.0L258.2 178.8M272.0 192.0L269.0 191.1M260.8 179.0L265.8 179.1M276.9 184.5L280.7 183.8M279.6 187.4L276.9 184.5M272.5 170.4L273.5 172.3M257.9 181.5L258.2 178.8M263.3 173.5L269.9 173.1M258.0 188.0L263.2 189.5M271.4 185.9L273.5 186.9M260.0 173.1L263.3 173.5M281.0 170.0L281.0 170.8M268.1 181.3L265.8 179.1M268.1 181.3L271.1 177.8M273.9 175.6L271.1 177.8M263.2 189.5L262.6 186.1M257.8 170.0L262.6 171.8M277.7 178.5L278.0 174.3M260.8 179.0L265.8 177.5M258.0 188.0L257.9 181.5M269.8 170.0L269.9 173.1M271.4 185.9L271.1 177.8M257.8 170.0L258.0 188.0M257.9 181.5L260.8 179.0M263.3 173.5L260.8 179.0M281.4 176.8L277.7 178.5M263.3 173.5L262.6 171.8M268.1 181.3L270.3 185.7M263.2 189.5L265.8 188.2M263.8 170.0L263.3 173.5M269.8 170.0L272.1 172.0M271.4 185.9L267.5 188.4M269.8 170.0L272.5 170.4M271.4 185.9L276.9 184.5M257.8 170.0L263.8 170.0M262.6 186.1L266.9 181.2M282.0 186.0L279.6 187.4M265.8 177.5L269.9 173.1M281.0 170.8L278.0 174.3M272.6 173.5L269.9 173.1M265.8 179.1L266.9 181.2M257.9 181.5L260.1 184.9M257.8 170.0L257.9 181.5M279.6 187.4L280.7 183.8M260.1 184.9L260.8 179.0M277.7 178.5L271.1 177.8M271.4 185.9L268.1 181.3M267.5 188.4L270.3 185.7M281.4 176.8L281.8 182.8M263.8 170.0L269.8 170.0M277.7 178.5L276.9 184.5M274.5 190.5L273.5 186.9M276.9 184.5L276.9 188.2M274.5 190.5L276.9 188.2M266.0 178.6L265.8 179.1M258.0 188.0L258.0 187.5M282.0 186.0L280.7 183.8M266.0 178.6L271.1 177.8M260.8 179.0L266.9 181.2M273.9 175.6L274.9 174.0M271.4 185.9L270.3 185.7M263.3 173.5L265.8 177.5M269.8 170.0L275.8 170.0M272.1 172.0L272.6 173.5" stroke="#E8ECF0" stroke-width="0.8" fill="none" opacity="0.85"/><path d="M256.5 168.7h2.6v2.6h-2.6zM270.7 190.7h2.6v2.6h-2.6zM256.5 168.7h2.6v2.6h-2.6zM262.5 168.7h2.6v2.6h-2.6zM268.5 168.7h2.6v2.6h-2.6zM279.7 169.5h2.6v2.6h-2.6zM280.5 181.5h2.6v2.6h-2.6zM267.7 189.8h2.6v2.6h-2.6zM272.6 174.3h2.6v2.6h-2.6zM270.1 184.6h2.6v2.6h-2.6zM258.7 171.8h2.6v2.6h-2.6zM266.2 187.1h2.6v2.6h-2.6zM270.8 170.7h2.6v2.6h-2.6zM262.0 172.2h2.6v2.6h-2.6zM259.5 177.7h2.6v2.6h-2.6zM266.8 180.0h2.6v2.6h-2.6zM256.9 177.5h2.6v2.6h-2.6zM264.5 176.2h2.6v2.6h-2.6zM275.6 186.9h2.6v2.6h-2.6zM271.3 172.2h2.6v2.6h-2.6zM269.8 176.5h2.6v2.6h-2.6zM268.6 171.8h2.6v2.6h-2.6zM269.0 184.4h2.6v2.6h-2.6zM279.4 182.5h2.6v2.6h-2.6zM261.3 170.5h2.6v2.6h-2.6z" fill="#FFFFFF"/><path d="M249.3 264.9L249.2 252.9M258.6 340.2L251.1 349.7M248.9 277.3L253.6 268.7M254.1 316.0L252.4 311.3M243.0 330.6L243.8 324.6M245.5 347.0L246.8 347.1M272.0 246.0L269.1 252.0M249.6 351.4L245.5 347.0M260.0 328.6L250.9 326.5M261.9 318.7L254.1 316.0M243.8 324.6L245.7 324.8M261.9 318.7L261.1 322.7M269.1 279.1L261.9 273.7M266.4 288.4L265.6 285.4M247.6 282.8L250.7 279.6M272.0 240.0L266.0 240.0M258.6 340.2L247.5 342.1M272.0 252.0L272.0 258.0M243.0 330.6L244.9 312.7M259.8 297.2L264.5 299.2M267.6 289.8L266.4 288.4M259.3 361.8L262.4 359.7M260.0 240.0L266.0 240.0M267.6 293.4L259.8 297.2M268.2 290.8L269.2 287.6M257.7 360.1L257.9 355.8M257.6 292.6L266.4 288.4M256.8 353.8L261.7 347.7M249.2 252.9L265.7 255.1M251.7 318.2L248.8 320.9M244.0 322.5L245.7 324.8M272.0 240.0L272.0 246.0M264.1 350.9L256.8 353.8M244.9 312.7L245.4 306.7M272.0 252.0L269.1 252.0M241.6 342.5L242.3 336.5M266.0 240.0L268.4 246.1M241.6 342.8L245.5 347.0M272.0 270.0L266.1 267.0M248.7 270.8L248.9 277.3M244.8 328.4L245.7 324.8M253.7 355.7L256.8 353.8M249.6 309.2L250.9 312.3M265.0 305.1L264.5 299.2M263.7 310.9L254.1 316.0M253.7 246.3L265.7 255.1M249.6 351.4L251.1 349.7M249.8 259.0L249.3 264.9M257.7 360.1L253.7 355.7M263.7 310.9L262.7 304.1M245.4 306.7L245.9 300.7M247.0 288.8L257.6 292.6M261.3 345.6L261.7 347.7M258.0 339.0L258.9 334.5M249.2 252.9L253.7 246.3M248.9 277.3L250.7 279.6M260.8 263.3L259.5 267.9M244.9 312.7L249.6 309.2M246.0 299.6L245.9 300.7M244.9 312.7L250.9 312.3M251.7 318.2L254.1 316.0M268.2 290.8L267.9 291.3M247.5 342.1L250.9 326.5M267.0 356.7L266.8 356.3M272.0 270.0L261.9 273.7M270.9 281.8L265.6 285.4M269.1 279.1L265.6 285.4M245.9 300.7L249.6 309.2M256.8 353.8L251.1 349.7M245.7 324.8L248.8 320.9M272.0 278.0L268.9 277.5M266.1 267.0L271.9 264.6M254.0 240.0L260.0 240.0M241.6 342.5L247.5 342.1M264.1 350.9L257.9 355.8M243.8 324.6L244.3 318.6M249.3 264.9L249.8 258.9M243.0 330.6L244.8 328.4M246.5 294.7L247.0 288.8M245.9 300.7L255.2 301.2M264.1 350.9L261.7 347.7M253.7 355.7L257.9 355.8M247.0 288.8L247.6 282.8M249.6 351.4L246.8 347.1M247.5 342.1L246.8 347.1M253.6 268.7L261.9 273.7M272.0 270.0L268.9 277.5M262.4 359.7L257.9 355.8M244.3 318.6L244.9 312.7M270.9 281.8L269.2 287.6M265.7 255.1L268.4 246.1M255.2 301.2L252.4 297.5M261.9 318.7L262.3 316.8M272.0 258.0L272.0 264.0M258.9 334.5L247.5 342.1M241.6 342.8L247.5 342.1M242.3 336.5L247.5 342.1M269.2 287.6L266.4 288.4M254.8 308.9L252.4 311.3M269.2 287.6L267.6 293.4M261.1 322.7L250.9 326.5M272.0 278.0L272.0 276.0M249.8 258.9L249.2 252.9M250.7 279.6L261.9 273.7M244.0 322.5L244.3 318.6M272.0 264.0L272.0 270.0M247.6 282.8L248.1 276.8M272.0 276.0L268.9 277.5M249.2 252.9L248.7 246.9M249.3 264.9L260.8 263.3M258.0 339.0L247.5 342.1M269.2 287.6L267.6 289.8M267.6 293.4L264.5 299.2M272.0 258.0L265.7 255.1M251.7 318.2L250.9 326.5M272.0 246.0L268.4 246.1M248.1 276.8L248.7 270.8M261.1 322.7L260.0 328.6M267.6 293.4L266.3 299.2M272.0 240.0L268.4 246.1M244.0 322.5L248.8 320.9M248.1 276.8L248.9 277.3M258.9 334.5L261.3 345.6M266.3 299.2L265.0 305.1M249.8 258.9L265.7 255.1M253.7 355.7L251.1 349.7M272.0 270.0L272.0 276.0M272.0 264.0L271.9 264.6M255.2 301.2L262.7 304.1M260.0 328.6L258.9 334.5M251.7 318.2L250.9 312.3M257.9 355.8L256.8 353.8M268.2 290.8L267.6 293.4M260.0 240.0L268.4 246.1M272.0 246.0L272.0 252.0M246.5 294.7L252.4 297.5M259.8 297.2L252.4 297.5M265.0 305.1L263.7 310.9M266.3 299.2L264.5 299.2M267.6 293.4L267.9 291.3M246.0 299.6L252.4 297.5M248.7 270.8L249.3 264.9M254.1 316.0L250.9 312.3M250.9 312.3L252.4 311.3M241.6 342.8L241.6 342.5M248.7 270.8L253.6 268.7M270.9 281.8L269.1 279.1M268.2 290.8L267.6 289.8M259.8 297.2L255.2 301.2M247.6 282.8L257.6 292.6M259.5 267.9L261.9 273.7M249.6 309.2L252.4 311.3M266.1 267.0L265.7 255.1M261.3 345.6L251.1 349.7M254.8 308.9L255.2 301.2M245.5 347.0L247.5 342.1M248.0 240.0L254.0 240.0M263.7 310.9L262.3 316.8M250.9 326.5L248.8 320.9M248.7 270.8L249.2 252.9M266.1 267.0L261.9 273.7M257.6 292.6L265.6 285.4M258.9 334.5L250.9 326.5M242.3 336.5L250.9 326.5M249.6 309.2L254.8 308.9M243.0 330.6L244.3 318.6M267.0 356.7L262.4 359.7M246.8 347.1L251.1 349.7M259.8 297.2L262.7 304.1M248.0 240.0L253.7 246.3M254.8 308.9L262.7 304.1M272.0 278.0L269.1 279.1M257.6 292.6L250.7 279.6M249.8 259.0L260.8 263.3M269.1 252.0L268.4 246.1M264.5 299.2L262.7 304.1M244.0 322.5L243.8 324.6M272.0 264.0L266.1 267.0M244.3 318.6L248.8 320.9M264.1 350.9L266.8 356.3M259.3 361.8L257.7 360.1M265.0 305.1L262.7 304.1M272.0 258.0L269.1 252.0M244.3 318.6L251.7 318.2M266.8 356.3L262.4 359.7M254.1 316.0L254.8 308.9M267.6 293.4L266.4 288.4M262.3 316.8L254.1 316.0M272.0 278.0L270.9 281.8M258.9 334.5L258.6 340.2M272.0 264.0L265.7 255.1M260.0 240.0L253.7 246.3M244.8 328.4L250.9 326.5M248.7 246.9L253.7 246.3M267.6 289.8L267.9 291.3M249.6 309.2L255.2 301.2M259.8 297.2L257.6 292.6M269.1 279.1L268.9 277.5M265.6 285.4L261.9 273.7M268.9 277.5L261.9 273.7M261.1 322.7L251.7 318.2M249.8 259.0L249.8 258.9M247.6 282.8L248.9 277.3M249.8 258.9L260.8 263.3M245.4 306.7L249.6 309.2M262.4 359.7L257.7 360.1M258.0 339.0L258.6 340.2M247.0 288.8L252.4 297.5M245.7 324.8L250.9 326.5M242.3 336.5L244.8 328.4M258.6 340.2L261.3 345.6M245.9 300.7L252.4 297.5M242.3 336.5L243.0 330.6M269.2 287.6L265.6 285.4M253.6 268.7L250.7 279.6M250.7 279.6L265.6 285.4M249.3 264.9L253.6 268.7M247.5 342.1L251.1 349.7M272.0 270.0L271.9 264.6M246.0 299.6L246.5 294.7M253.6 268.7L260.8 263.3M244.9 312.7L251.7 318.2M263.7 310.9L254.8 308.9M261.1 322.7L254.1 316.0M253.6 268.7L259.5 267.9M266.8 356.3L257.9 355.8M248.0 240.0L248.7 246.9M253.7 355.7L249.6 351.4M243.8 324.6L244.8 328.4M253.7 246.3L268.4 246.1M265.7 255.1L260.8 263.3M261.3 345.6L264.1 350.9M267.6 293.4L257.6 292.6M267.9 291.3L266.4 288.4M251.1 349.7L261.7 347.7M269.1 252.0L265.7 255.1M254.0 240.0L253.7 246.3M266.1 267.0L260.8 263.3M257.6 292.6L252.4 297.5M266.1 267.0L259.5 267.9" stroke="#E8ECF0" stroke-width="0.8" fill="none" opacity="0.85"/><path d="M270.7 238.7h2.6v2.6h-2.6zM266.9 289.5h2.6v2.6h-2.6zM260.6 317.4h2.6v2.6h-2.6zM256.7 337.7h2.6v2.6h-2.6zM265.7 355.4h2.6v2.6h-2.6zM240.3 341.5h2.6v2.6h-2.6zM242.7 321.2h2.6v2.6h-2.6zM248.5 257.7h2.6v2.6h-2.6zM246.7 238.7h2.6v2.6h-2.6zM258.7 238.7h2.6v2.6h-2.6zM264.7 238.7h2.6v2.6h-2.6zM270.7 238.7h2.6v2.6h-2.6zM270.7 244.7h2.6v2.6h-2.6zM270.7 262.7h2.6v2.6h-2.6zM270.7 268.7h2.6v2.6h-2.6zM269.6 280.5h2.6v2.6h-2.6zM266.3 292.1h2.6v2.6h-2.6zM265.0 297.9h2.6v2.6h-2.6zM261.0 315.5h2.6v2.6h-2.6zM257.6 333.2h2.6v2.6h-2.6zM257.3 338.9h2.6v2.6h-2.6zM265.5 355.0h2.6v2.6h-2.6zM256.4 358.8h2.6v2.6h-2.6zM248.3 350.1h2.6v2.6h-2.6zM240.3 341.2h2.6v2.6h-2.6zM241.0 335.2h2.6v2.6h-2.6zM243.6 311.4h2.6v2.6h-2.6zM244.1 305.4h2.6v2.6h-2.6zM244.6 299.4h2.6v2.6h-2.6zM245.7 287.5h2.6v2.6h-2.6zM246.3 281.5h2.6v2.6h-2.6zM247.9 251.6h2.6v2.6h-2.6zM247.4 245.6h2.6v2.6h-2.6zM248.3 307.9h2.6v2.6h-2.6zM250.4 316.9h2.6v2.6h-2.6zM258.5 295.9h2.6v2.6h-2.6zM252.8 314.7h2.6v2.6h-2.6zM263.2 297.9h2.6v2.6h-2.6zM253.5 307.6h2.6v2.6h-2.6zM249.6 311.0h2.6v2.6h-2.6zM252.4 245.0h2.6v2.6h-2.6zM261.4 302.8h2.6v2.6h-2.6zM247.6 276.0h2.6v2.6h-2.6zM252.3 267.4h2.6v2.6h-2.6zM266.6 290.0h2.6v2.6h-2.6zM267.8 250.7h2.6v2.6h-2.6zM264.4 253.8h2.6v2.6h-2.6zM249.4 278.3h2.6v2.6h-2.6zM251.1 310.0h2.6v2.6h-2.6zM267.6 276.2h2.6v2.6h-2.6zM255.5 352.5h2.6v2.6h-2.6zM270.6 263.3h2.6v2.6h-2.6zM259.5 262.0h2.6v2.6h-2.6zM267.1 244.8h2.6v2.6h-2.6zM243.5 327.1h2.6v2.6h-2.6zM244.4 323.5h2.6v2.6h-2.6zM249.6 325.2h2.6v2.6h-2.6zM260.4 346.4h2.6v2.6h-2.6zM258.2 266.6h2.6v2.6h-2.6z" fill="#FFFFFF"/><path d="M287.5 336.4L290.3 334.5M271.0 282.0L275.1 288.1M269.4 270.1L275.2 275.7M289.3 311.2L279.4 311.4M271.8 287.9L271.0 282.0M292.8 251.7L289.6 246.0M268.0 240.0L268.0 246.2M274.0 267.0L272.9 261.1M275.2 317.7L273.4 299.8M274.8 311.7L274.2 305.8M292.0 340.3L278.4 328.5M290.2 317.2L294.5 328.1M275.1 288.1L278.4 283.6M292.3 240.0L292.0 240.0M291.0 277.3L281.5 279.7M280.1 274.6L281.5 279.7M292.0 240.0L287.8 243.3M274.2 305.8L273.4 299.8M293.0 257.7L293.2 263.7M281.0 270.6L291.7 267.6M286.3 264.8L281.1 264.5M275.8 326.3L278.4 328.5M286.0 240.0L292.0 240.0M290.2 317.2L286.8 323.1M293.6 273.0L291.0 277.3M291.0 322.5L286.8 323.1M280.1 274.6L291.0 277.3M281.0 270.6L275.6 266.0M292.0 240.0L292.5 245.7M269.4 270.1L268.6 264.2M268.0 258.2L272.9 261.1M280.0 255.8L269.4 255.5M273.4 299.8L272.6 293.9M275.2 317.7L278.8 319.2M289.5 299.4L289.3 311.2M275.6 266.0L274.0 267.0M282.1 247.9L280.0 255.8M274.6 308.5L274.2 305.8M275.2 317.7L277.3 313.3M273.4 260.9L272.9 261.1M275.2 275.7L277.7 275.5M278.7 279.5L277.7 275.5M274.6 308.5L279.4 311.4M287.5 336.4L278.4 328.5M297.6 333.2L290.3 334.5M294.9 342.8L292.0 340.3M297.6 333.2L296.8 341.7M275.6 323.7L275.2 317.7M291.4 287.5L281.5 279.7M292.8 251.7L286.1 254.0M288.5 306.0L288.6 305.3M301.2 339.0L300.8 338.3M281.0 326.7L286.8 323.1M280.0 240.0L280.7 247.5M268.0 252.2L275.2 244.2M277.3 313.3L275.2 310.9M275.8 326.3L281.0 326.7M281.0 270.6L280.1 274.6M293.2 275.6L291.0 277.3M292.5 245.7L292.8 251.7M291.7 267.6L291.5 266.8M279.4 311.4L280.7 320.3M286.3 264.8L291.7 267.6M268.0 260.0L268.0 258.2M274.0 240.0L280.0 240.0M286.3 264.8L286.1 254.0M292.3 281.6L291.4 287.5M274.0 240.0L275.2 244.2M280.7 247.5L275.2 244.2M268.0 258.2L268.0 252.2M285.2 245.6L287.8 243.3M268.0 246.2L275.2 244.2M280.0 240.0L277.1 241.9M278.2 286.0L281.5 279.7M280.0 240.0L286.0 240.0M293.6 273.0L293.5 269.7M269.4 270.1L269.3 264.7M268.0 252.2L268.0 246.2M281.0 270.6L291.0 277.3M282.1 247.9L280.7 247.5M293.0 257.7L286.1 254.0M273.4 260.9L269.4 255.5M278.4 328.5L281.0 326.7M271.0 282.0L278.7 279.5M269.4 270.1L274.0 267.0M270.2 276.0L269.4 270.1M270.8 280.6L275.2 275.7M291.4 287.5L290.4 293.4M288.6 305.3L274.2 305.8M268.0 252.2L280.0 255.8M271.8 287.9L275.1 288.1M291.0 322.5L291.3 323.0M275.6 323.7L280.7 320.3M288.6 305.3L279.4 311.4M292.5 245.7L289.6 246.0M285.2 245.6L286.1 254.0M293.2 263.7L293.5 269.7M290.4 293.4L289.5 299.4M275.2 275.7L278.7 279.5M281.0 270.6L274.0 267.0M270.8 280.6L270.2 276.0M290.2 317.2L279.4 311.4M293.2 263.7L286.3 264.8M289.5 299.4L273.4 299.8M280.7 247.5L280.0 255.8M269.4 255.5L272.9 261.1M286.0 240.0L287.8 243.3M274.8 311.7L273.4 299.8M289.6 246.0L287.8 243.3M270.8 280.6L278.7 279.5M280.7 320.3L278.8 319.2M289.5 299.4L274.1 296.5M292.3 240.0L292.5 245.7M294.5 328.1L297.6 333.2M274.1 296.5L275.1 288.1M292.5 245.7L287.8 243.3M289.5 299.4L288.6 305.3M274.6 308.5L274.8 311.7M273.4 260.9L280.0 255.8M278.7 279.5L281.5 279.7M290.2 317.2L280.7 320.3M288.6 305.3L289.3 311.2M282.1 247.9L286.1 254.0M293.2 275.6L292.3 281.6M294.9 342.8L296.8 341.7M297.6 333.2L300.8 338.3M292.3 281.6L281.5 279.7M268.0 252.2L280.7 247.5M289.6 246.0L286.1 254.0M273.4 299.8L274.1 296.5M292.8 251.7L293.0 257.7M290.4 293.4L278.2 286.0M269.3 264.7L272.9 261.1M289.3 311.2L290.2 317.2M280.0 240.0L285.2 245.6M281.0 270.6L286.3 264.8M294.5 328.1L290.3 334.5M278.4 283.6L281.5 279.7M268.0 258.2L269.4 255.5M293.5 269.7L291.7 267.6M292.3 281.6L291.0 277.3M274.8 311.7L277.3 313.3M301.2 339.0L294.9 342.8M281.0 326.7L280.7 320.3M286.8 323.1L290.3 334.5M272.6 293.9L274.1 296.5M282.9 332.4L290.3 334.5M280.7 320.3L286.8 323.1M289.3 311.2L294.5 328.1M293.2 263.7L291.5 266.8M290.2 317.2L291.3 323.0M268.0 240.0L275.2 244.2M275.2 275.7L274.0 267.0M282.1 247.9L285.2 245.6M274.0 240.0L277.1 241.9M280.7 247.5L277.1 241.9M291.3 323.0L294.5 328.1M286.0 240.0L285.2 245.6M275.6 266.0L281.1 264.5M289.6 246.0L285.2 245.6M274.2 305.8L279.4 311.4M279.4 311.4L278.8 319.2M294.9 342.8L278.4 328.5M272.6 293.9L275.1 288.1M291.0 322.5L290.2 317.2M279.4 311.4L277.3 313.3M278.8 319.2L277.3 313.3M278.2 286.0L278.4 283.6M293.6 273.0L293.2 275.6M280.1 274.6L277.7 275.5M268.6 264.2L272.9 261.1M270.8 280.6L271.0 282.0M288.5 306.0L279.4 311.4M280.0 255.8L281.1 264.5M287.5 336.4L282.9 332.4M291.3 323.0L286.8 323.1M288.6 305.3L273.4 299.8M275.8 326.3L275.6 323.7M269.3 264.7L274.0 267.0M277.1 241.9L275.2 244.2M274.0 267.0L277.7 275.5M290.4 293.4L274.1 296.5M293.0 257.7L286.3 264.8M282.9 332.4L278.4 328.5M268.0 260.0L272.9 261.1M275.6 323.7L278.8 319.2M300.8 338.3L296.8 341.7M274.8 311.7L275.2 310.9M268.0 260.0L268.6 264.2M271.0 282.0L278.4 283.6M292.0 340.3L290.3 334.5M297.6 333.2L292.0 340.3M275.1 288.1L278.2 286.0M288.5 306.0L289.3 311.2M270.2 276.0L275.2 275.7M293.6 273.0L291.7 267.6M294.5 328.1L286.8 323.1M301.2 339.0L296.8 341.7M291.0 277.3L291.7 267.6M274.1 296.5L278.2 286.0M296.8 341.7L292.0 340.3M291.4 287.5L278.2 286.0M275.6 266.0L273.4 260.9M272.6 293.9L271.8 287.9M280.0 255.8L286.1 254.0M282.9 332.4L281.0 326.7M278.7 279.5L278.4 283.6M280.7 247.5L285.2 245.6M273.4 260.9L281.1 264.5M286.3 264.8L280.0 255.8M281.0 270.6L281.1 264.5M281.0 270.6L277.7 275.5M275.6 266.0L272.9 261.1M286.3 264.8L291.5 266.8M268.0 252.2L269.4 255.5M275.2 317.7L274.8 311.7M293.2 263.7L291.7 267.6M282.9 332.4L286.8 323.1M292.0 340.3L287.5 336.4M268.6 264.2L269.3 264.7M279.4 311.4L275.2 310.9M268.0 240.0L274.0 240.0M275.6 323.7L281.0 326.7M274.6 308.5L275.2 310.9M280.1 274.6L278.7 279.5" stroke="#E8ECF0" stroke-width="0.8" fill="none" opacity="0.85"/><path d="M287.2 304.7h2.6v2.6h-2.6zM299.9 337.7h2.6v2.6h-2.6zM293.6 341.5h2.6v2.6h-2.6zM274.5 325.0h2.6v2.6h-2.6zM273.3 307.2h2.6v2.6h-2.6zM269.5 279.3h2.6v2.6h-2.6zM266.7 258.7h2.6v2.6h-2.6zM266.7 238.7h2.6v2.6h-2.6zM272.7 238.7h2.6v2.6h-2.6zM278.7 238.7h2.6v2.6h-2.6zM284.7 238.7h2.6v2.6h-2.6zM290.7 238.7h2.6v2.6h-2.6zM291.2 244.4h2.6v2.6h-2.6zM291.7 256.4h2.6v2.6h-2.6zM291.9 262.4h2.6v2.6h-2.6zM292.2 268.4h2.6v2.6h-2.6zM291.9 274.3h2.6v2.6h-2.6zM291.0 280.3h2.6v2.6h-2.6zM288.0 309.9h2.6v2.6h-2.6zM288.9 315.9h2.6v2.6h-2.6zM290.0 321.7h2.6v2.6h-2.6zM293.2 326.8h2.6v2.6h-2.6zM296.3 331.9h2.6v2.6h-2.6zM299.5 337.0h2.6v2.6h-2.6zM295.5 340.4h2.6v2.6h-2.6zM286.2 335.1h2.6v2.6h-2.6zM281.6 331.1h2.6v2.6h-2.6zM277.1 327.2h2.6v2.6h-2.6zM274.3 322.4h2.6v2.6h-2.6zM273.9 316.4h2.6v2.6h-2.6zM272.1 298.5h2.6v2.6h-2.6zM270.5 286.6h2.6v2.6h-2.6zM269.7 280.7h2.6v2.6h-2.6zM267.3 262.9h2.6v2.6h-2.6zM280.8 246.6h2.6v2.6h-2.6zM274.3 264.7h2.6v2.6h-2.6zM285.0 263.5h2.6v2.6h-2.6zM278.1 310.1h2.6v2.6h-2.6zM279.4 319.0h2.6v2.6h-2.6zM273.9 274.4h2.6v2.6h-2.6zM272.8 295.2h2.6v2.6h-2.6zM272.1 259.6h2.6v2.6h-2.6zM273.8 286.8h2.6v2.6h-2.6zM279.4 246.2h2.6v2.6h-2.6zM289.7 276.0h2.6v2.6h-2.6zM275.8 240.6h2.6v2.6h-2.6zM290.4 266.3h2.6v2.6h-2.6zM278.7 254.5h2.6v2.6h-2.6zM277.4 278.2h2.6v2.6h-2.6zM277.5 317.9h2.6v2.6h-2.6zM283.9 244.3h2.6v2.6h-2.6zM279.8 263.2h2.6v2.6h-2.6zM286.5 242.0h2.6v2.6h-2.6zM276.0 312.0h2.6v2.6h-2.6zM280.2 278.4h2.6v2.6h-2.6zM273.9 242.9h2.6v2.6h-2.6z" fill="#FFFFFF"/><path d="M268 172H281V186L272 188L268 186Z" fill="#F4F6F8" opacity="0.7"/><path d="M255.6 170.5Q255 160 269 157.8Q283 158 283.2 170.5Z" fill="#F01010"/><path d="M261 161h2v1h-2zM265 163h2v2h-2zM272 160h2v2h-2zM268 167h2v1h-2z" fill="#FFC0C0"/><g fill="none" stroke="#1414E0" stroke-width="2.6"><path d="M181 225L216 214L245 204L268 197L300 194L331 193"/><path d="M268 184V255M258 255L276 250M258 255L256.2 299.6L250.5 334.5L257.4 352.3M275.8 252.7L282.2 290.8L283.5 318.7L289.8 335.8"/></g><circle cx="181" cy="225" r="3" fill="#1010E0"/><circle cx="216" cy="214" r="3" fill="#1010E0"/><circle cx="232" cy="209" r="2.5" fill="#1010E0"/><circle cx="245" cy="204" r="2.5" fill="#1010E0"/><circle cx="268" cy="197" r="3.5" fill="#1010E0"/><circle cx="300" cy="194" r="2.5" fill="#1010E0"/><circle cx="318" cy="193" r="2.5" fill="#1010E0"/><circle cx="331" cy="193" r="3" fill="#1010E0"/><circle cx="268" cy="188" r="2.5" fill="#1010E0"/><circle cx="268" cy="215" r="2.5" fill="#1010E0"/><circle cx="268" cy="232" r="2.5" fill="#1010E0"/><circle cx="258" cy="255" r="2.5" fill="#1010E0"/><circle cx="275.8" cy="250" r="2.5" fill="#1010E0"/><circle cx="256.2" cy="299.6" r="2.5" fill="#1010E0"/><circle cx="250.5" cy="334.5" r="3" fill="#1010E0"/><circle cx="257.4" cy="352.3" r="2.5" fill="#1010E0"/><circle cx="282.2" cy="290.8" r="2.5" fill="#1010E0"/><circle cx="283.5" cy="318.7" r="2.5" fill="#1010E0"/><circle cx="289.8" cy="335.8" r="3" fill="#1010E0"/><path d="M266.3 316V337.7" stroke="#40D0E0" stroke-width="1"/><path d="M266.3 337.7L279.6 330.7" stroke="#C8E040" stroke-width="1"/><path d="M267 339L283.5 351.7" stroke="#A040C0" stroke-width="1"/></g></svg><div class="a" style="left:540px;top:45px;width:539px;height:403px;border-top:1px solid #FFFFFF;"></div><div class="a" style="left:541px;top:47px;width:538px;height:401px;border-top:1px solid #5A6A70;border-left:1px solid #5A6A70;border-right:2px solid #FAFCFA;border-bottom:2px solid #FAFCFA"></div><svg class="a" style="left:542px;top:48px;background:#9C9C9C" width="535" height="398" viewBox="0 0 535 398" shape-rendering="auto"><path d="M9.5 0V398M24.5 0V398M39.5 0V398M54.5 0V398M69.5 0V398M84.5 0V398M99.5 0V398M114.5 0V398M129.5 0V398M144.5 0V398M159.5 0V398M174.5 0V398M189.5 0V398M204.5 0V398M219.5 0V398M234.5 0V398M249.5 0V398M264.5 0V398M279.5 0V398M294.5 0V398M309.5 0V398M324.5 0V398M339.5 0V398M355.5 0V398M370.5 0V398M385.5 0V398M400.5 0V398M415.5 0V398M430.5 0V398M445.5 0V398M460.5 0V398M475.5 0V398M490.5 0V398M505.5 0V398M520.5 0V398M0 7.5H535M0 22.5H535M0 37.5H535M0 52.5H535M0 67.5H535M0 82.5H535M0 97.5H535M0 112.5H535M0 127.5H535M0 142.5H535M0 157.5H535M0 172.5H535M0 187.5H535M0 202.5H535M0 217.5H535M0 232.5H535M0 247.5H535M0 262.5H535M0 277.5H535M0 292.5H535M0 307.5H535M0 323.5H535M0 338.5H535M0 353.5H535M0 368.5H535M0 383.5H535" stroke="#4C4C4C" stroke-width="1" fill="none"/><g transform="translate(-542,-48)"><path d="M805.0 432.0L812.0 446.0M818.8 442.8L840.0 446.0M719.5 340.7L729.7 349.4M814.1 383.4L834.5 396.4M765.0 446.0L790.0 440.0M724.1 315.7L719.5 340.7M833.6 435.4L826.2 435.4M744.5 415.0L721.3 428.9M731.5 359.3L720.4 372.3M720.4 344.4L716.7 356.5M741.8 345.4L729.7 349.4M783.5 398.2L805.0 432.0M823.4 327.7L820.6 360.2M831.7 425.2L833.6 435.4M800.0 446.0L790.0 440.0M724.1 349.0L729.7 349.4M831.7 425.2L805.0 432.0M778.9 312.9L800.2 337.0M720.4 372.3L724.1 401.0M724.1 315.7L713.0 366.7M716.7 356.5L713.0 366.7M743.6 319.4L765.9 347.2M738.0 402.9L744.5 415.0M721.3 428.9L725.0 446.0M783.5 398.2L785.4 426.1M747.3 383.4L738.0 402.9M765.0 446.0L800.0 446.0M800.0 446.0L812.0 446.0M724.1 349.0L723.2 357.4M845.0 446.0L840.0 446.0M856.8 408.5L831.7 425.2M713.0 366.7L720.4 372.3M741.8 345.4L749.2 360.2M731.5 373.2L724.1 401.0M723.2 357.4L731.5 359.3M719.5 340.7L741.8 345.4M776.1 383.4L783.5 398.2M765.0 446.0L725.0 446.0M724.1 315.7L778.9 312.9M719.5 340.7L713.0 366.7M749.2 360.2L775.2 370.4M731.5 359.3L749.2 360.2M840.0 446.0L812.0 446.0M785.4 426.1L805.0 432.0M747.3 383.4L744.5 415.0M814.1 383.4L783.5 398.2M724.1 401.0L738.0 402.9M743.6 319.4L719.5 340.7M775.2 370.4L747.3 383.4M744.5 415.0L749.2 440.0M818.8 442.8L826.2 435.4M713.0 366.7L721.3 428.9M749.2 440.0L725.0 446.0M747.3 383.4L776.1 383.4M723.2 357.4L720.4 372.3M719.5 340.7L716.7 356.5M834.5 396.4L805.0 432.0M743.6 319.4L741.8 345.4M775.2 370.4L814.1 383.4M785.4 426.1L765.0 446.0M731.5 359.3L731.5 373.2M856.8 408.5L857.7 437.2M721.3 428.9L733.4 439.0M713.0 366.7L724.1 401.0M834.5 396.4L856.8 408.5M747.3 383.4L724.1 401.0M776.1 383.4L814.1 383.4M831.7 425.2L857.7 437.2M733.4 439.0L749.2 440.0M800.2 337.0L820.6 360.2M724.1 401.0L744.5 415.0M720.4 372.3L731.5 373.2M729.7 349.4L723.2 357.4M778.9 312.9L765.9 347.2M744.5 415.0L785.4 426.1M783.5 398.2L744.5 415.0M834.5 396.4L831.7 425.2M747.3 383.4L783.5 398.2M800.2 337.0L765.9 347.2M719.5 340.7L720.4 344.4M749.2 360.2L731.5 373.2M831.7 425.2L826.2 435.4M724.1 401.0L721.3 428.9M743.6 319.4L778.9 312.9M814.1 383.4L805.0 432.0M785.4 426.1L760.0 436.0M833.6 435.4L840.0 446.0M720.4 344.4L729.7 349.4M820.6 360.2L814.1 383.4M749.2 440.0L765.0 446.0M818.8 442.8L812.0 446.0M765.0 446.0L760.0 436.0M800.2 337.0L775.2 370.4M800.0 446.0L805.0 432.0M778.9 312.9L823.4 327.7M765.9 347.2L775.2 370.4M744.5 415.0L733.4 439.0M785.4 426.1L790.0 440.0M826.2 435.4L805.0 432.0M823.4 327.7L800.2 337.0M731.5 373.2L747.3 383.4M723.2 357.4L713.0 366.7M724.1 349.0L716.7 356.5M733.4 439.0L725.0 446.0M775.2 370.4L776.1 383.4M833.6 435.4L845.0 446.0M826.2 435.4L840.0 446.0M744.5 415.0L760.0 436.0M741.8 345.4L731.5 359.3M820.6 360.2L834.5 396.4M749.2 440.0L760.0 436.0M724.1 315.7L743.6 319.4M765.9 347.2L749.2 360.2M820.6 360.2L775.2 370.4M805.0 432.0L790.0 440.0M818.8 442.8L805.0 432.0M857.7 437.2L845.0 446.0M749.2 360.2L747.3 383.4M833.6 435.4L857.7 437.2M729.7 349.4L731.5 359.3M716.7 356.5L723.2 357.4M720.4 344.4L724.1 349.0M741.8 345.4L765.9 347.2M721 440L858 444M730 444L850 432M740 446L835 420M725 436L857 446M733.4 439L860 440M749.2 440L857.7 437.2M721.3 428.9L857 430M744.5 415L857.7 437.2M738 442L833 432M760 446L856.8 408.5M780 446L834.5 396.4M725 446L805 432" stroke="#E4E4E4" stroke-width="1" fill="none"/><path d="M722.5 314.1h3.2v3.2h-3.2zM742.0 317.8h3.2v3.2h-3.2zM777.3 311.3h3.2v3.2h-3.2zM821.8 326.1h3.2v3.2h-3.2zM798.6 335.4h3.2v3.2h-3.2zM717.9 339.1h3.2v3.2h-3.2zM718.8 342.8h3.2v3.2h-3.2zM740.2 343.8h3.2v3.2h-3.2zM764.3 345.6h3.2v3.2h-3.2zM722.5 347.4h3.2v3.2h-3.2zM728.1 347.8h3.2v3.2h-3.2zM715.1 354.9h3.2v3.2h-3.2zM721.6 355.8h3.2v3.2h-3.2zM729.9 357.7h3.2v3.2h-3.2zM747.6 358.6h3.2v3.2h-3.2zM819.0 358.6h3.2v3.2h-3.2zM711.4 365.1h3.2v3.2h-3.2zM718.8 370.7h3.2v3.2h-3.2zM729.9 371.6h3.2v3.2h-3.2zM773.6 368.8h3.2v3.2h-3.2zM745.7 381.8h3.2v3.2h-3.2zM774.5 381.8h3.2v3.2h-3.2zM812.5 381.8h3.2v3.2h-3.2zM722.5 399.4h3.2v3.2h-3.2zM736.4 401.3h3.2v3.2h-3.2zM781.9 396.6h3.2v3.2h-3.2zM832.9 394.8h3.2v3.2h-3.2zM855.2 406.9h3.2v3.2h-3.2zM742.9 413.4h3.2v3.2h-3.2zM830.1 423.6h3.2v3.2h-3.2zM719.7 427.3h3.2v3.2h-3.2zM731.8 437.4h3.2v3.2h-3.2zM747.6 438.4h3.2v3.2h-3.2zM817.2 441.2h3.2v3.2h-3.2zM832.0 433.8h3.2v3.2h-3.2zM856.1 435.6h3.2v3.2h-3.2zM783.8 424.5h3.2v3.2h-3.2zM824.6 433.8h3.2v3.2h-3.2zM763.4 444.4h3.2v3.2h-3.2zM798.4 444.4h3.2v3.2h-3.2zM843.4 444.4h3.2v3.2h-3.2zM723.4 444.4h3.2v3.2h-3.2zM758.4 434.4h3.2v3.2h-3.2zM803.4 430.4h3.2v3.2h-3.2zM788.4 438.4h3.2v3.2h-3.2zM838.4 444.4h3.2v3.2h-3.2zM810.4 444.4h3.2v3.2h-3.2z" fill="#FFFFFF"/><path d="M815.0 292.0L825.0 305.0M842.0 312.9L811.3 319.4M811.3 319.4L820.0 312.0M740.0 290.0L730.0 300.0M779.8 312.0L760.0 312.0M727.8 284.1L735.0 283.0M828.0 287.8L825.0 305.0M811.3 319.4L779.8 312.0M811.3 319.4L800.0 300.0M727.8 284.1L730.0 300.0M790.0 284.0L800.0 290.0M770.0 296.0L750.0 305.0M785.0 305.0L795.0 310.0M760.0 290.0L745.0 296.0M779.8 312.0L785.0 305.0M790.0 284.0L770.0 296.0M815.0 292.0L820.0 312.0M770.0 296.0L760.0 290.0M825.0 305.0L820.0 312.0M811.3 277.6L815.0 292.0M778.0 273.0L770.0 296.0M811.3 277.6L800.0 290.0M740.0 290.0L760.0 282.0M740.0 290.0L760.0 290.0M815.0 292.0L800.0 300.0M750.0 305.0L760.0 312.0M842.0 312.9L825.0 305.0M739.0 276.7L740.0 290.0M759.4 270.2L811.3 277.6M720.4 308.2L730.0 300.0M759.4 270.2L760.0 282.0M750.0 305.0L745.0 296.0M760.0 282.0L760.0 290.0M800.0 300.0L785.0 305.0M811.3 319.4L795.0 310.0M744.5 313.8L760.0 312.0M739.0 276.7L735.0 283.0M778.0 273.0L790.0 284.0M720.4 308.2L730.0 310.0M779.8 312.0L795.0 310.0M744.5 313.8L745.0 296.0M811.3 277.6L828.0 287.8M760.0 282.0L770.0 296.0M727.8 284.1L739.0 276.7M730.0 300.0L745.0 296.0M800.0 300.0L820.0 312.0M842.0 312.9L820.0 312.0M790.0 284.0L785.0 305.0M770.0 296.0L760.0 312.0M739.0 276.7L759.4 270.2M727.8 284.1L740.0 290.0M759.4 270.2L778.0 273.0M841.0 304.5L825.0 305.0M779.8 312.0L770.0 296.0M716.7 299.9L730.0 300.0M744.5 313.8L730.0 300.0M800.0 300.0L795.0 310.0M739.0 276.7L760.0 282.0M740.0 290.0L745.0 296.0M815.0 292.0L800.0 290.0M778.0 273.0L811.3 277.6M770.0 296.0L785.0 305.0M778.0 273.0L760.0 282.0M716.7 299.9L727.8 284.1M811.3 277.6L790.0 284.0M744.5 313.8L730.0 310.0M828.0 287.8L841.0 304.5M790.0 284.0L800.0 300.0M828.0 287.8L815.0 292.0M750.0 305.0L760.0 290.0M716.7 299.9L720.4 308.2M730.0 300.0L730.0 310.0M800.0 300.0L800.0 290.0M744.5 313.8L720.4 308.2M744.5 313.8L750.0 305.0M841.0 304.5L842.0 312.9M740.0 290.0L735.0 283.0M716.7 299.9L727.8 284.1L739.0 276.7L759.4 270.2L778.0 273.0L811.3 277.6L828.0 287.8L841.0 304.5L842.0 312.9L811.3 319.4L779.8 312.0L744.5 313.8L720.4 308.2L716.7 299.9M717 300L760 296L842 312M727 284L800 290L841 304M739 277L830 300M720 308L811 319M745 313L828 288M720 295L790 298L835 310M730 290L780 288L825 298M725 305L770 306L840 308M735 280L790 282L815 290M718 302L745 285L760 300L790 292L815 305L838 300M722 310L750 298L780 312L805 300L830 315" stroke="#F01010" stroke-width="1.6" fill="none"/><path d="M715.5 298.6h2.5v2.5h-2.5zM726.5 282.9h2.5v2.5h-2.5zM737.8 275.4h2.5v2.5h-2.5zM758.1 268.9h2.5v2.5h-2.5zM776.8 271.8h2.5v2.5h-2.5zM810.0 276.4h2.5v2.5h-2.5zM826.8 286.6h2.5v2.5h-2.5zM839.8 303.2h2.5v2.5h-2.5zM840.8 311.6h2.5v2.5h-2.5zM810.0 318.1h2.5v2.5h-2.5zM778.5 310.8h2.5v2.5h-2.5zM743.2 312.6h2.5v2.5h-2.5zM719.1 306.9h2.5v2.5h-2.5zM738.8 288.8h2.5v2.5h-2.5zM758.8 280.8h2.5v2.5h-2.5zM788.8 282.8h2.5v2.5h-2.5zM813.8 290.8h2.5v2.5h-2.5zM728.8 298.8h2.5v2.5h-2.5zM768.8 294.8h2.5v2.5h-2.5zM798.8 298.8h2.5v2.5h-2.5zM823.8 303.8h2.5v2.5h-2.5zM748.8 303.8h2.5v2.5h-2.5zM783.8 303.8h2.5v2.5h-2.5zM758.8 288.8h2.5v2.5h-2.5zM733.8 281.8h2.5v2.5h-2.5zM798.8 288.8h2.5v2.5h-2.5zM818.8 310.8h2.5v2.5h-2.5zM758.8 310.8h2.5v2.5h-2.5zM728.8 308.8h2.5v2.5h-2.5zM743.8 294.8h2.5v2.5h-2.5zM793.8 308.8h2.5v2.5h-2.5z" fill="#FF1010"/><g fill="none" stroke="#1414E8" stroke-width="1.3"><circle cx="777" cy="399.2" r="14.8"/><circle cx="781.6" cy="421.4" r="14.8"/><ellipse cx="777" cy="401" rx="14.8" ry="4"/><ellipse cx="781.6" cy="423" rx="14.8" ry="4"/><path d="M777 384.4V414M781.6 406.6V446M774 438L781.6 425L789 446M776 446L781.6 436"/></g></g></svg><div class="a" style="left:0px;top:448px;width:539px;height:403px;border-top:1px solid #FFFFFF;"></div><div class="a" style="left:1px;top:450px;width:538px;height:401px;border-top:1px solid #5A6A70;border-left:1px solid #5A6A70;border-right:2px solid #FAFCFA;border-bottom:2px solid #FAFCFA"></div><svg class="a" style="left:2px;top:451px;background:#9C9C9C" width="535" height="398" viewBox="0 0 535 398" shape-rendering="auto"><path d="M8.5 0V398M35.5 0V398M62.5 0V398M89.5 0V398M116.5 0V398M143.5 0V398M170.5 0V398M197.5 0V398M224.5 0V398M251.5 0V398M278.5 0V398M305.5 0V398M332.5 0V398M359.5 0V398M387.5 0V398M414.5 0V398M441.5 0V398M468.5 0V398M495.5 0V398M522.5 0V398M0 16.5H535M0 43.5H535M0 70.5H535M0 97.5H535M0 124.5H535M0 151.5H535M0 178.5H535M0 205.5H535M0 232.5H535M0 259.5H535M0 286.5H535M0 313.5H535M0 340.5H535M0 367.5H535M0 394.5H535" stroke="#4C4C4C" stroke-width="1" fill="none"/><g transform="translate(-2,-451)"><path d="M292.1 590.0L275.0 574.0M207.3 609.0L237.8 621.6M162.4 726.5L173.4 739.0M170.4 675.5L149.4 678.6M320.0 675.5L290.4 670.0M173.4 739.0L188.2 734.3M437.3 746.2L439.7 756.0M331.6 586.6L318.2 609.0M23.2 756.4L56.5 753.2M173.1 739.3L177.2 752.4M439.7 756.0L438.0 767.3M177.6 752.7L188.2 734.3M198.3 590.0L198.3 609.0M161.4 523.7L185.0 520.0M56.5 753.2L55.3 758.0M168.6 627.9L200.0 625.0M281.3 651.2L255.4 650.0M333.4 728.5L341.2 730.3M292.1 590.0L292.1 609.0M283.1 551.5L275.0 574.0M111.4 756.0L59.5 766.5M55.3 758.0L59.5 766.5M200.0 670.0L170.5 675.2M314.6 538.0L305.4 520.0M216.3 686.3L274.1 686.3M175.0 700.0L162.4 726.5M158.8 586.6L172.2 609.0M23.2 756.4L25.3 786.6M207.3 551.5L230.0 520.0M172.2 609.0L168.6 627.9M216.2 686.4L220.5 709.0M218.4 752.4L220.5 709.0M284.0 489.5L284.4 500.0M198.3 609.0L200.0 625.0M341.5 678.2L341.2 730.3M317.3 739.3L312.8 752.7M257.1 605.4L252.6 621.6M314.6 538.0L330.4 545.0M272.4 752.7L274.7 752.6M302.0 733.9L309.8 734.5M283.1 609.0L290.4 625.0M209.1 651.2L235.0 650.0M177.6 752.7L218.0 752.7M175.0 700.0L149.4 678.6M215.4 574.0L225.0 560.0M329.0 523.7L314.6 538.0M175.8 538.0L185.0 520.0M185.0 690.0L200.0 670.0M115.6 754.5L123.4 759.2M206.0 500.0L230.0 520.0M284.0 489.5L260.4 520.0M333.4 728.5L329.0 728.4M305.4 520.0L260.4 520.0M383.0 755.0L391.2 760.3M158.8 586.6L180.3 583.0M437.3 746.2L468.5 758.0M173.1 739.3L157.8 729.2M312.8 752.7L317.3 751.4M157.0 728.5L149.4 678.6M288.5 633.2L303.8 652.1M175.8 538.0L160.0 545.0M451.4 769.7L467.3 786.6M188.4 733.9L173.4 739.0M256.2 590.0L257.1 605.4M233.3 605.4L257.1 605.4M230.6 632.3L209.1 651.2M345.5 677.6L386.5 719.8M302.0 733.9L290.4 715.0M393.5 748.6L438.0 767.3M320.4 741.6L317.3 751.4M175.0 700.0L185.0 690.0M172.2 567.7L190.0 560.0M206.4 489.5L230.0 520.0M109.3 746.5L115.6 754.5M206.4 743.8L206.3 744.4M157.0 728.5L157.8 729.2M281.3 651.2L274.1 686.3M333.4 728.5L315.4 700.0M115.6 754.5L111.4 756.0M148.9 678.2L149.4 678.6M384.1 732.6L393.5 748.6M318.2 567.7L331.6 586.6M230.6 632.3L259.8 632.3M393.5 748.6L383.0 755.0M274.1 686.3L290.4 715.0M283.1 551.5L265.4 560.0M108.0 718.4L110.8 739.7M188.2 734.3L206.3 744.4M311.0 651.2L320.0 675.5M216.3 686.3L216.2 686.4M206.3 744.4L218.4 752.4M312.8 752.7L373.1 760.8M157.0 728.5L110.8 739.7M109.3 746.5L59.5 766.5M234.2 590.0L241.4 581.2M206.4 743.8L220.5 709.0M451.4 769.7L468.5 758.0M341.5 678.2L315.4 700.0M256.2 590.0L249.0 581.2M218.0 752.7L218.4 752.4M274.1 686.3L269.7 708.7M188.4 733.9L162.4 726.5M256.2 590.0L233.3 605.4M225.0 560.0L265.4 560.0M48.5 770.0L33.8 797.1M274.1 686.3L255.4 650.0M209.1 651.2L216.3 686.3M318.2 609.0L292.1 609.0M290.4 715.0L305.4 690.0M391.2 760.3L438.0 767.3M206.4 743.8L188.2 734.3M157.0 728.5L123.4 759.2M198.3 609.0L207.3 609.0M123.4 759.2L177.2 752.4M345.5 677.6L341.2 730.3M373.1 760.8L454.4 796.0M241.4 581.2L225.0 560.0M216.3 686.3L235.0 650.0M438.0 767.3L451.4 769.7M200.0 715.0L220.5 709.0M331.6 586.6L330.4 545.0M391.2 760.3L454.4 796.0M312.8 752.7L309.8 734.5M321.8 627.9L290.4 625.0M341.5 678.2L333.4 728.5M234.2 590.0L256.2 590.0M234.2 590.0L207.3 609.0M59.5 766.5L48.5 770.0M172.2 609.0L200.0 625.0M314.6 538.0L283.1 551.5M188.4 733.9L175.0 700.0M198.3 590.0L190.0 560.0M274.1 686.3L220.7 708.7M302.0 733.9L312.8 752.7M48.5 770.0L25.3 786.6M283.1 609.0L252.6 621.6M292.1 590.0L300.4 560.0M283.1 551.5L260.4 520.0M237.8 621.6L230.6 632.3M328.1 726.7L309.8 734.5M220.7 708.7L269.7 708.7M320.0 675.5L320.9 675.2M317.3 739.3L329.0 728.4M108.0 718.4L59.5 746.5M311.0 651.2L303.8 652.1M252.6 621.6L259.8 632.3M206.4 489.5L185.0 520.0M318.2 609.0L321.8 627.9M206.4 743.8L200.0 715.0M186.6 652.1L170.5 675.2M158.8 586.6L160.0 545.0M110.8 739.7L123.4 759.2M292.1 609.0L290.4 625.0M59.5 746.5L59.5 766.5M329.0 523.7L305.4 520.0M237.8 621.6L252.6 621.6M283.1 551.5L300.4 560.0M108.0 718.4L55.3 727.5M341.2 730.3L384.1 732.6M275.0 574.0L265.4 560.0M175.8 538.0L207.3 551.5M286.9 744.4L274.7 752.6M161.4 523.7L160.0 545.0M218.0 752.7L272.4 752.7M329.0 523.7L330.4 545.0M179.4 651.2L186.6 652.1M329.0 728.4L320.4 741.6M123.4 759.2L157.8 729.2M331.6 586.6L310.1 583.0M341.2 730.3L317.3 751.4M207.3 551.5L190.0 560.0M180.3 583.0L198.3 590.0M201.9 633.2L179.4 651.2M311.0 651.2L320.9 675.2M259.8 632.3L281.3 651.2M110.8 739.7L59.5 746.5M241.4 581.2L215.4 574.0M284.4 500.0L260.4 520.0M230.0 520.0L225.0 560.0M172.2 567.7L180.3 583.0M249.0 581.2L275.0 574.0M318.2 567.7L300.4 560.0M173.4 739.0L177.2 752.4M260.4 520.0L265.4 560.0M23.2 756.4L48.5 770.0M157.0 728.5L162.3 726.7M177.6 752.7L177.2 752.4M162.3 726.7L173.4 739.0M201.9 633.2L209.1 651.2M269.7 708.7L218.4 752.4M207.3 609.0L233.3 605.4M111.4 756.0L33.8 797.1M230.0 520.0L260.4 520.0M230.6 632.3L200.0 625.0M373.1 760.8L391.2 760.3M230.6 632.3L255.4 650.0M315.4 700.0L305.4 690.0M386.5 719.8L393.5 748.6M198.3 590.0L172.2 609.0M185.0 690.0L216.2 686.4M467.3 786.6L454.4 796.0M111.4 756.0L123.4 759.2M292.1 590.0L318.2 609.0M328.1 726.7L317.3 739.3M241.4 581.2L249.0 581.2M436.4 728.4L393.5 748.6M383.0 755.0L373.1 760.8M302.0 733.9L286.9 744.4M207.3 551.5L185.0 520.0M292.1 609.0L283.1 609.0M275.0 574.0L300.4 560.0M439.7 756.0L468.5 758.0M162.3 726.7L162.4 726.5M198.3 590.0L207.3 609.0M281.3 651.2L290.4 670.0M333.4 728.5L320.4 741.6M468.5 758.0L467.3 786.6M341.5 678.2L345.5 677.6M393.5 748.6L439.7 756.0M206.4 489.5L161.4 523.7M162.3 726.7L173.1 739.3M321.8 627.9L288.5 633.2M220.7 708.7L220.5 709.0M215.4 574.0L190.0 560.0M386.5 719.8L384.1 732.6M318.2 609.0L290.4 625.0M269.7 708.7L284.0 743.8M206.0 500.0L185.0 520.0M185.0 690.0L170.5 675.2M284.0 489.5L305.4 520.0M284.0 743.8L272.4 752.7M314.6 538.0L300.4 560.0M186.6 652.1L209.1 651.2M170.4 675.5L170.5 675.2M318.2 567.7L330.4 545.0M284.0 743.8L290.4 715.0M249.0 581.2L265.4 560.0M209.1 651.2L200.0 670.0M168.6 627.9L201.9 633.2M180.3 583.0L190.0 560.0M288.5 633.2L311.0 651.2M198.3 590.0L234.2 590.0M269.7 708.7L272.4 752.7M56.5 753.2L59.5 766.5M256.2 590.0L241.4 581.2M218.0 752.7L206.3 744.4M256.2 590.0L283.1 609.0M310.1 583.0L300.4 560.0M341.5 678.2L320.9 675.2M393.5 748.6L437.3 746.2M272.4 752.7L218.4 752.4M175.0 700.0L200.0 715.0M179.4 651.2L170.5 675.2M172.2 567.7L160.0 545.0M158.8 586.6L168.6 627.9M55.3 727.5L56.5 753.2M312.8 752.7L274.7 752.6M168.6 627.9L179.4 651.2M290.4 715.0L309.8 734.5M288.5 633.2L281.3 651.2M175.8 538.0L190.0 560.0M233.3 605.4L252.6 621.6M157.8 729.2L177.2 752.4M317.3 739.3L317.3 751.4M311.0 651.2L341.5 678.2M200.0 715.0L216.2 686.4M249.0 581.2L225.0 560.0M55.3 727.5L23.2 756.4M384.1 732.6L373.1 760.8M318.2 567.7L310.1 583.0M170.4 675.5L175.0 700.0M393.5 748.6L391.2 760.3M274.1 686.3L305.4 690.0M188.2 734.3L177.2 752.4M438.0 767.3L454.4 796.0M252.6 621.6L230.6 632.3M312.8 752.7L286.9 744.4M55.3 727.5L59.5 746.5M310.1 583.0L292.1 590.0M234.2 590.0L215.4 574.0M451.4 769.7L454.4 796.0M259.8 632.3L290.4 625.0M179.4 651.2L148.9 678.2M256.2 590.0L275.0 574.0M188.4 733.9L188.2 734.3M233.3 605.4L237.8 621.6M170.4 675.5L185.0 690.0M207.3 609.0L200.0 625.0M207.3 551.5L215.4 574.0M274.1 686.3L290.4 670.0M317.3 739.3L320.4 741.6M161.4 523.7L175.8 538.0M206.4 489.5L260.4 520.0M109.3 746.5L111.4 756.0M157.0 728.5L108.0 718.4M333.4 728.5L328.1 726.7M206.4 743.8L218.4 752.4M109.3 746.5L59.5 746.5M157.0 728.5L162.4 726.5M188.4 733.9L206.4 743.8M288.5 633.2L259.8 632.3M148.9 678.2L170.5 675.2M201.9 633.2L200.0 625.0M384.1 732.6L383.0 755.0M302.0 733.9L284.0 743.8M185.0 520.0L230.0 520.0M283.1 609.0L257.1 605.4M283.1 551.5L305.4 520.0M328.1 726.7L329.0 728.4M341.2 730.3L320.4 741.6M341.2 730.3L373.1 760.8M216.3 686.3L200.0 670.0M108.0 718.4L149.4 678.6M180.3 583.0L172.2 609.0M206.4 489.5L206.0 500.0M284.0 489.5L329.0 523.7M110.8 739.7L115.6 754.5M310.1 583.0L318.2 609.0M148.9 678.2L108.0 718.4M59.5 746.5L56.5 753.2M234.2 590.0L233.3 605.4M59.5 766.5L33.8 797.1M188.4 733.9L200.0 715.0M314.6 538.0L318.2 567.7M259.8 632.3L255.4 650.0M260.4 520.0L225.0 560.0M341.2 730.3L386.5 719.8M317.3 739.3L309.8 734.5M186.6 652.1L200.0 670.0M149.4 678.6L170.5 675.2M157.0 728.5L175.0 700.0M315.4 700.0L320.9 675.2M303.8 652.1L290.4 670.0M292.1 590.0L283.1 609.0M207.3 609.0L230.6 632.3M235.0 650.0L255.4 650.0M328.1 726.7L315.4 700.0M436.4 728.4L437.3 746.2M230.6 632.3L235.0 650.0M283.1 609.0L259.8 632.3M216.3 686.3L255.4 650.0M175.8 538.0L172.2 567.7M284.0 743.8L274.7 752.6M201.9 633.2L230.6 632.3M315.4 700.0L309.8 734.5M317.3 751.4L373.1 760.8M110.8 739.7L109.3 746.5M284.4 500.0L305.4 520.0M269.7 708.7L220.5 709.0M436.4 728.4L468.5 758.0M320.0 675.5L315.4 700.0M172.2 567.7L158.8 586.6M331.6 586.6L321.8 627.9M23.2 756.4L55.3 758.0M200.0 715.0L185.0 690.0M207.3 551.5L225.0 560.0M303.8 652.1L281.3 651.2M321.8 627.9L311.0 651.2M439.7 756.0L451.4 769.7M177.6 752.7L206.3 744.4M162.3 726.7L157.8 729.2M201.9 633.2L186.6 652.1M269.7 708.7L290.4 715.0M292.1 590.0L256.2 590.0M55.3 758.0L48.5 770.0M200.0 670.0L216.2 686.4M206.4 489.5L284.0 489.5M320.0 675.5L305.4 690.0M216.3 686.3L220.7 708.7M173.1 739.3L173.4 739.0M315.4 700.0L290.4 715.0M303.8 652.1L320.0 675.5M220.7 708.7L216.2 686.4M284.0 743.8L286.9 744.4M386.5 719.8L436.4 728.4M177.6 752.7L123.4 759.2M172.2 609.0L198.3 609.0M198.3 590.0L215.4 574.0M305.4 690.0L290.4 670.0M288.5 633.2L290.4 625.0M23.2 756.4L0.0 748.0M25.3 786.6L0.0 790.0M33.8 797.1L2.0 830.0M55.3 727.5L0.0 742.0M468.5 758.0L537.0 735.0M467.3 786.6L537.0 752.0M454.4 796.0L537.0 785.0M59.5 766.5L60.0 849.0M111.4 756.0L90.0 849.0M123.4 759.2L205.0 849.0M177.2 752.4L172.0 849.0M373.1 760.8L330.0 849.0M391.2 760.3L405.0 849.0M438.0 767.3L420.0 849.0M451.4 769.7L480.0 849.0M23.2 756.4L108.0 718.4M108.0 718.4L162.4 726.5M386.5 719.8L329.0 728.4M436.4 728.4L537.0 775.0M0.0 775.0L123.4 759.2M148.9 678.2L110.8 739.7M341.6 678.2L384.1 732.6M206.4 743.8L130.0 849.0M287.2 743.8L360.0 849.0M55.3 758.0L240.0 849.0M439.7 756.0L260.0 849.0M55.0 727.0L108.4 718.3M23.4 756.4L58.6 747.0M3.0 754.0L23.4 756.4M3.0 776.0L48.4 770.3M3.0 789.0L25.6 786.4M3.0 799.6L34.4 796.7M25.6 786.4L34.4 848.0M23.4 756.4L34.4 796.7M55.0 727.0L64.5 848.0M55.0 727.0L34.4 848.0M108.4 718.3L89.4 848.0M115.7 755.0L160.0 817.0M48.4 770.3L160.0 839.0M111.0 756.0L160.0 790.0M23.4 756.4L160.0 780.0M58.6 747.0L158.0 729.0M3.0 776.0L115.7 755.0M48.4 770.3L108.4 718.3M467.9 786.4L536.8 749.8M467.9 786.4L536.8 754.2M467.9 757.0L536.8 749.8M467.9 786.4L536.8 796.7M454.7 796.0L536.8 804.0M467.9 786.4L536.8 832.0M384.4 754.2L380.0 812.8M438.6 776.0L380.0 812.8M385.9 719.0L409.3 846.5M438.6 767.0L431.3 846.5M451.8 769.6L450.0 848.0M454.7 796.0L441.0 848.0M467.9 757.0L467.9 786.4M384.1 732.6L451.8 769.6M393.5 748.6L467.9 757.0M373.1 760.8L467.9 786.4M206.4 489.5H284.5M206.4 496H284.5M206.4 489.5V609M284.5 489.5V609M207 503L285 503M161.4 523.7L207 503M325 522.8L285 503" stroke="#E4E4E4" stroke-width="0.9" fill="none"/><path d="M204.9 488.0h3v3h-3zM282.5 488.0h3v3h-3zM159.9 522.2h3v3h-3zM327.5 522.2h3v3h-3zM174.3 536.5h3v3h-3zM313.1 536.5h3v3h-3zM205.8 550.0h3v3h-3zM281.6 550.0h3v3h-3zM170.7 566.2h3v3h-3zM316.7 566.2h3v3h-3zM157.3 585.1h3v3h-3zM330.1 585.1h3v3h-3zM178.8 581.5h3v3h-3zM308.6 581.5h3v3h-3zM196.8 588.5h3v3h-3zM290.6 588.5h3v3h-3zM232.7 588.5h3v3h-3zM254.7 588.5h3v3h-3zM239.9 579.7h3v3h-3zM247.5 579.7h3v3h-3zM213.9 572.5h3v3h-3zM273.5 572.5h3v3h-3zM170.7 607.5h3v3h-3zM316.7 607.5h3v3h-3zM196.8 607.5h3v3h-3zM290.6 607.5h3v3h-3zM205.8 607.5h3v3h-3zM281.6 607.5h3v3h-3zM231.8 603.9h3v3h-3zM255.6 603.9h3v3h-3zM236.3 620.1h3v3h-3zM251.1 620.1h3v3h-3zM167.1 626.4h3v3h-3zM320.3 626.4h3v3h-3zM200.4 631.7h3v3h-3zM287.0 631.7h3v3h-3zM229.1 630.8h3v3h-3zM258.3 630.8h3v3h-3zM177.9 649.7h3v3h-3zM309.5 649.7h3v3h-3zM185.1 650.6h3v3h-3zM302.3 650.6h3v3h-3zM207.6 649.7h3v3h-3zM279.8 649.7h3v3h-3zM147.4 676.7h3v3h-3zM340.0 676.7h3v3h-3zM168.9 674.0h3v3h-3zM318.5 674.0h3v3h-3zM214.8 684.8h3v3h-3zM272.6 684.8h3v3h-3zM219.2 707.2h3v3h-3zM268.2 707.2h3v3h-3zM155.5 727.0h3v3h-3zM331.9 727.0h3v3h-3zM160.8 725.2h3v3h-3zM326.6 725.2h3v3h-3zM186.9 732.4h3v3h-3zM300.5 732.4h3v3h-3zM171.6 737.8h3v3h-3zM315.8 737.8h3v3h-3zM204.9 742.3h3v3h-3zM282.5 742.3h3v3h-3zM176.1 751.2h3v3h-3zM311.3 751.2h3v3h-3zM216.5 751.2h3v3h-3zM270.9 751.2h3v3h-3zM204.5 498.5h3v3h-3zM282.9 498.5h3v3h-3zM183.5 518.5h3v3h-3zM303.9 518.5h3v3h-3zM228.5 518.5h3v3h-3zM258.9 518.5h3v3h-3zM158.5 543.5h3v3h-3zM328.9 543.5h3v3h-3zM188.5 558.5h3v3h-3zM298.9 558.5h3v3h-3zM223.5 558.5h3v3h-3zM263.9 558.5h3v3h-3zM198.5 623.5h3v3h-3zM288.9 623.5h3v3h-3zM173.5 698.5h3v3h-3zM313.9 698.5h3v3h-3zM198.5 713.5h3v3h-3zM288.9 713.5h3v3h-3zM183.5 688.5h3v3h-3zM303.9 688.5h3v3h-3zM233.5 648.5h3v3h-3zM253.9 648.5h3v3h-3zM198.5 668.5h3v3h-3zM288.9 668.5h3v3h-3zM106.5 716.9h3v3h-3zM53.8 726.0h3v3h-3zM21.7 754.9h3v3h-3zM109.3 738.2h3v3h-3zM107.8 745.0h3v3h-3zM114.1 753.0h3v3h-3zM109.9 754.5h3v3h-3zM121.9 757.7h3v3h-3zM156.3 727.7h3v3h-3zM160.9 725.0h3v3h-3zM171.9 737.5h3v3h-3zM186.7 732.8h3v3h-3zM204.8 742.9h3v3h-3zM216.9 750.9h3v3h-3zM175.7 750.9h3v3h-3zM58.0 745.0h3v3h-3zM55.0 751.7h3v3h-3zM53.8 756.5h3v3h-3zM58.0 765.0h3v3h-3zM47.0 768.5h3v3h-3zM23.8 785.1h3v3h-3zM32.3 795.6h3v3h-3zM147.9 677.1h3v3h-3zM169.0 673.7h3v3h-3zM214.7 684.9h3v3h-3zM219.0 707.5h3v3h-3zM319.4 673.7h3v3h-3zM344.0 676.1h3v3h-3zM327.5 726.9h3v3h-3zM339.7 728.8h3v3h-3zM308.3 733.0h3v3h-3zM318.9 740.1h3v3h-3zM315.8 749.9h3v3h-3zM285.4 742.9h3v3h-3zM273.2 751.1h3v3h-3zM385.0 718.3h3v3h-3zM434.9 726.9h3v3h-3zM382.6 731.1h3v3h-3zM392.0 747.1h3v3h-3zM381.5 753.5h3v3h-3zM371.6 759.3h3v3h-3zM389.7 758.8h3v3h-3zM435.8 744.7h3v3h-3zM438.2 754.5h3v3h-3zM436.5 765.8h3v3h-3zM449.9 768.2h3v3h-3zM467.0 756.5h3v3h-3zM465.8 785.1h3v3h-3zM452.9 794.5h3v3h-3z" fill="#FFFFFF"/><path d="M331.3 500.3L295.3 474.3M295.3 473.4L268.4 461.7M279.1 488.6L291.7 518.3M295.3 474.3L316.9 501.2M230.6 461.7L210.0 480.0M174.0 499.4L200.0 511.1M200.0 511.1L190.0 490.0M183.9 469.8L210.0 480.0M230.6 473.4L234.2 490.4M230.6 473.4L255.0 478.0M229.7 452.7L230.6 461.7M228.8 452.7L198.3 452.7M200.0 511.1L180.0 525.0M201.9 501.2L210.0 480.0M182.0 458.0L183.9 469.8M230.6 461.7L230.6 473.4M183.9 469.8L190.0 490.0M162.3 532.7L180.0 525.0M160.5 472.5L174.0 499.4M229.7 452.7L268.4 461.7M230.6 501.2L200.0 511.1M241.4 510.2L260.0 520.0M234.2 490.4L210.0 480.0M201.9 501.2L190.0 490.0M313.3 534.5L309.7 521.9M228.8 533.6L280.0 530.0M150.7 521.0L158.8 518.3M160.5 472.5L182.0 458.0M331.3 500.3L331.3 501.2M234.2 490.4L230.6 501.2M234.2 490.4L266.6 503.9M230.6 501.2L241.4 510.2M228.8 452.7L229.7 452.7M198.3 452.7L230.6 461.7M229.7 519.2L229.7 532.7M291.7 518.3L280.0 530.0M174.0 499.4L158.8 518.3M210.0 480.0L190.0 490.0M228.8 533.6L229.7 519.2M183.9 469.8L174.0 499.4M279.1 488.6L298.9 493.1M298.9 493.1L291.7 518.3M316.9 501.2L309.7 521.9M201.9 501.2L200.0 511.1M198.3 452.7L183.9 469.8M331.3 501.2L320.5 521.9M229.7 519.2L241.4 510.2M298.9 493.1L316.9 501.2M158.8 518.3L180.0 525.0M270.0 462.6L255.0 478.0M316.9 501.2L331.3 501.2M160.5 472.5L183.9 469.8M241.4 510.2L266.6 503.9M313.3 534.5L291.7 518.3M148.0 487.7L158.8 472.5M270.0 462.6L279.1 488.6M148.0 487.7L174.0 499.4M198.3 452.7L210.0 480.0M279.1 488.6L266.6 503.9M331.3 500.3L316.9 501.2M343.0 519.2L331.3 500.3M295.3 474.3L298.9 493.1M230.6 501.2L229.7 519.2M150.7 521.0L162.3 532.7M313.3 534.5L320.5 521.9M270.0 462.6L268.4 461.7M158.8 472.5L182.0 458.0M343.0 519.2L331.3 501.2M229.7 532.7L260.0 520.0M162.3 532.7L158.8 518.3M162.3 532.7L164.1 530.9M295.3 473.4L295.3 474.3M200.0 511.1L229.7 519.2M230.6 461.7L255.0 478.0M230.6 473.4L210.0 480.0M162.3 532.7L228.8 533.6M229.7 532.7L280.0 530.0M164.1 530.9L180.0 525.0M268.4 461.7L255.0 478.0M228.8 533.6L313.3 534.5M266.6 503.9L255.0 478.0M316.9 501.2L291.7 518.3M174.0 499.4L190.0 490.0M228.8 533.6L180.0 525.0M230.6 461.7L268.4 461.7M266.6 503.9L291.7 518.3M266.6 503.9L260.0 520.0M260.0 520.0L280.0 530.0M313.3 534.5L343.0 519.2M316.9 501.2L320.5 521.9M148.0 487.7L150.7 521.0M234.2 490.4L241.4 510.2M174.0 499.4L180.0 525.0M234.2 490.4L255.0 478.0M230.6 501.2L210.0 480.0M228.8 533.6L229.7 532.7M148.0 487.7L158.8 518.3M331.3 500.3L295.3 473.4M313.3 534.5L280.0 530.0M291.7 518.3L309.7 521.9M266.6 503.9L280.0 530.0M295.3 473.4L279.1 488.6M201.9 501.2L230.6 501.2M295.3 474.3L279.1 488.6M279.1 488.6L255.0 478.0M241.4 510.2L229.7 532.7M309.7 521.9L320.5 521.9M198.3 452.7L182.0 458.0M228.8 452.7L230.6 461.7M158.8 472.5L160.5 472.5M148.0 487.7L160.5 472.5M228.8 533.6L200.0 511.1M158.8 518.3L164.1 530.9M343.0 519.2L320.5 521.9M295.3 473.4L270.0 462.6M148.0 487.7L150.7 521.0L162.3 532.7L228.8 533.6L313.3 534.5L343.0 519.2L331.3 500.3L295.3 473.4L270.0 462.6L228.8 452.7L198.3 452.7L158.8 472.5L148.0 487.7M150 505L200 512L230 519L292 518L343 519M160 472L230 462L295 474M175 530L230 533L313 534M230 452V533M150 522L300 490M162 532L331 500M200 453L330 520M150 495L230 490L320 510L343 519M155 480L230 478L300 490L331 500M165 525L229 525L313 528M185 458L230 470L295 474L320 500M160 510L200 495L240 505L280 495L330 512M175 470L210 490L250 480L290 500" stroke="#F01010" stroke-width="1.5" fill="none"/><path d="M146.8 486.4h2.5v2.5h-2.5zM149.4 519.8h2.5v2.5h-2.5zM161.1 531.5h2.5v2.5h-2.5zM227.6 532.4h2.5v2.5h-2.5zM312.1 533.2h2.5v2.5h-2.5zM341.8 518.0h2.5v2.5h-2.5zM330.1 499.1h2.5v2.5h-2.5zM294.1 472.1h2.5v2.5h-2.5zM268.8 461.4h2.5v2.5h-2.5zM227.6 451.4h2.5v2.5h-2.5zM197.1 451.4h2.5v2.5h-2.5zM157.6 471.2h2.5v2.5h-2.5zM159.2 471.2h2.5v2.5h-2.5zM180.8 456.8h2.5v2.5h-2.5zM228.4 451.4h2.5v2.5h-2.5zM229.3 460.4h2.5v2.5h-2.5zM229.3 472.1h2.5v2.5h-2.5zM267.1 460.4h2.5v2.5h-2.5zM294.1 473.1h2.5v2.5h-2.5zM182.7 468.6h2.5v2.5h-2.5zM172.8 498.1h2.5v2.5h-2.5zM200.7 499.9h2.5v2.5h-2.5zM232.9 489.1h2.5v2.5h-2.5zM229.3 499.9h2.5v2.5h-2.5zM277.9 487.4h2.5v2.5h-2.5zM297.6 491.9h2.5v2.5h-2.5zM315.6 499.9h2.5v2.5h-2.5zM330.1 499.9h2.5v2.5h-2.5zM157.6 517.0h2.5v2.5h-2.5zM198.8 509.9h2.5v2.5h-2.5zM228.4 518.0h2.5v2.5h-2.5zM240.2 508.9h2.5v2.5h-2.5zM265.4 502.6h2.5v2.5h-2.5zM290.4 517.0h2.5v2.5h-2.5zM308.4 520.6h2.5v2.5h-2.5zM319.2 520.6h2.5v2.5h-2.5zM228.4 531.5h2.5v2.5h-2.5zM162.8 529.6h2.5v2.5h-2.5zM312.1 533.2h2.5v2.5h-2.5zM208.8 478.8h2.5v2.5h-2.5zM253.8 476.8h2.5v2.5h-2.5zM188.8 488.8h2.5v2.5h-2.5zM258.8 518.8h2.5v2.5h-2.5zM178.8 523.8h2.5v2.5h-2.5zM278.8 528.8h2.5v2.5h-2.5z" fill="#FF2020"/><g fill="none" stroke="#1414E8" stroke-width="1.6"><circle cx="247.7" cy="682" r="27"/><circle cx="247.7" cy="719.5" r="27"/><ellipse cx="247.7" cy="684" rx="27" ry="3"/><ellipse cx="247.7" cy="693" rx="22" ry="7"/><ellipse cx="247.7" cy="719.5" rx="27" ry="5"/><path d="M247.7 655V849M220.7 682H274.7M247.7 746.5L220.5 812M247.7 746.5L275 812"/><rect x="220.5" y="812" width="54.5" height="40"/><path d="M220.5 815H275M220.5 839H275M228 812V849M268 812V849"/><path d="M3 846L8 835L18 827L32 826L45 832L51 841L53 849"/><path d="M7 849L11 838L20 830L32 829L43 835L48 843L49 849"/><path d="M23.4 826V849M28.6 826V849"/><path d="M168 849A32 36 0 0 1 232 849"/><path d="M200 813V849"/><path d="M264 849A32 36 0 0 1 328 849"/><path d="M296 813V849"/><path d="M441.5 849L446 838L456 828L468 825.3L482.6 829L491 838L494.3 849"/><path d="M446 849L449 840L458 831L468 828.5L480 832L488 840L490 849"/><path d="M468 826V849M471 826V849"/><path d="M55.7 848L172 815V849M55.7 849L172 840"/><path d="M323.2 814.7V849M323.2 814.7L438.6 848M323 840L437 849"/><path d="M495.7 825.3L537 830.4M495.7 825.3V849M495.7 827.5L537 837.7"/></g></g></svg><div class="a" style="left:540px;top:448px;width:539px;height:403px;border-top:1px solid #FFFFFF;"></div><div class="a" style="left:541px;top:450px;width:538px;height:401px;border-top:1px solid #5A6A70;border-left:1px solid #5A6A70;border-right:2px solid #FAFCFA;border-bottom:2px solid #FAFCFA"></div><svg class="a" style="left:542px;top:451px;background:#3380B5" width="535" height="398" viewBox="0 0 535 398" shape-rendering="auto"><g transform="translate(-542,-451)">
<defs>
<linearGradient id="brArmL" x1="0" y1="0" x2="0" y2="1"><stop offset="0" stop-color="#A8A8A8"/><stop offset="0.3" stop-color="#C8C8C8"/><stop offset="0.6" stop-color="#E2E2E2"/><stop offset="0.85" stop-color="#D0D0D0"/><stop offset="1" stop-color="#909090"/></linearGradient>
<linearGradient id="brArmR" x1="0" y1="0" x2="0" y2="1"><stop offset="0" stop-color="#909090"/><stop offset="0.2" stop-color="#C8C8C8"/><stop offset="0.5" stop-color="#DADADA"/><stop offset="0.8" stop-color="#B0B0B0"/><stop offset="1" stop-color="#6A6A6A"/></linearGradient>
<linearGradient id="brTorso" x1="0" y1="0" x2="1" y2="0.3"><stop offset="0" stop-color="#C0C0C0"/><stop offset="0.15" stop-color="#DCDCDC"/><stop offset="0.55" stop-color="#CACACA"/><stop offset="0.82" stop-color="#B4B4B4"/><stop offset="0.93" stop-color="#707070"/><stop offset="1" stop-color="#383838"/></linearGradient>
<linearGradient id="brHead" x1="0" y1="0" x2="1" y2="0"><stop offset="0" stop-color="#585858"/><stop offset="0.15" stop-color="#A4A4A4"/><stop offset="0.45" stop-color="#C8C8C8"/><stop offset="0.75" stop-color="#B0B0B0"/><stop offset="1" stop-color="#484848"/></linearGradient>
<linearGradient id="brHat" x1="0" y1="0" x2="1" y2="0.4"><stop offset="0" stop-color="#707070"/><stop offset="0.35" stop-color="#A0A0A0"/><stop offset="0.65" stop-color="#C4C4C4"/><stop offset="0.9" stop-color="#A8A8A8"/><stop offset="1" stop-color="#606060"/></linearGradient>
<linearGradient id="brNeck" x1="0" y1="0" x2="0" y2="1"><stop offset="0" stop-color="#585858"/><stop offset="1" stop-color="#9A9A9A"/></linearGradient>
<linearGradient id="brLap" x1="0" y1="0" x2="1" y2="0"><stop offset="0" stop-color="#505050"/><stop offset="0.3" stop-color="#A8A8A8"/><stop offset="1" stop-color="#C8C8C8"/></linearGradient>
<linearGradient id="brLapR" x1="0" y1="0" x2="1" y2="0"><stop offset="0" stop-color="#C0C0C0"/><stop offset="0.6" stop-color="#A0A0A0"/><stop offset="1" stop-color="#6A6A6A"/></linearGradient>
</defs>
<!-- torso -->
<path d="M667 758 L686.5 849 L802 849 L809 807.5 L816.6 771 L814 712 L806 709.6 L784 702.5 L770.8 700.8 L763.5 684.7 L750 692 L728 692 L709.3 692 L694.6 708 L691.7 715.5 L672 717 L667 735Z" fill="url(#brTorso)"/>
<path d="M750 760 L800 740 L812 770 L806 830 L770 845Z" fill="#A8A8A8" opacity="0.45"/>
<path d="M700 800 L760 790 L790 849 L700 849Z" fill="#D8D8D8" opacity="0.35"/>
<!-- right shoulder block -->
<path d="M770.8 700.8 L784 702.5 L806 709.6 L816 712 L816.6 771 L800 760 L780 730Z" fill="#B0B0B0" opacity="0.7"/>
<path d="M770.8 700.8 L784 702.5 L806 709.6 L836 710" fill="none" stroke="#303030" stroke-width="1.2"/>
<!-- left lapel -->
<path d="M709.3 692 L696 705 L691.7 717 L690.3 731.6 L705 740 L725 745 L718 700Z" fill="url(#brLap)"/>
<!-- right lapel -->
<path d="M763.5 684.7 L770.8 700.8 L775 712 L765 735 L752 745 L758 700Z" fill="url(#brLapR)"/>
<!-- neck -->
<path d="M718 689 L728.3 712.5 L738.6 731.6 L750.3 712.5 L762 687.6 L740 694Z" fill="url(#brNeck)"/>
<path d="M696 705 L691.7 717 L690.3 731.6 L693 735 L697 712Z" fill="#303030"/>
<!-- left arm -->
<path d="M542 732 L645 719.6 L672 717 L696 707.4 L691.7 717 L690.3 731.6 L676 760 L667 782 L542.4 780.6Z" fill="url(#brArmL)"/>
<path d="M542 732 L645 719.6 L672 717 L640 745 L590 750 L542 752Z" fill="#B4B4B4" opacity="0.6"/>
<path d="M600 752 L650 735 L672 725 L688 745 L667 770 L620 768Z" fill="#E8E8E8" opacity="0.5"/>
<path d="M590 778 L630 772 L667 766 L667 782 L600 781Z" fill="#505050" opacity="0.75"/>
<!-- right arm -->
<path d="M804.4 711 L836 710 L902 714.7 L970.4 719.6 L987.5 717 L1014.4 724.5 L1027.8 739 L1012 732 L1007 741.6 L1020.5 756 L982.6 749 L951 756 L877.6 758.7 L816.6 771 L814 712Z" fill="url(#brArmR)"/>
<path d="M836 710 L860 722 L950 725 L970 720 L902 714.7Z" fill="#A0A0A0" opacity="0.6"/>
<path d="M985 735 L1007 741.6 L1020.5 756 L982.6 749Z" fill="#E0E0E0"/>
<path d="M970 719.6 L987.5 717 L1014.4 724.5 L1027.8 739 L1012 732 L990 728 L975 725Z" fill="#484848"/>
<path d="M940 752 L982.6 749 L951 756Z" fill="#707070"/>
<!-- head -->
<path d="M711.5 644 L768 643 L768 671.5 L763.5 684.7 L752 690 L741.5 692 L728.3 690 L718 687.6 L711.5 676 L710 661Z" fill="url(#brHead)"/>
<path d="M718 673 L736 674 L740 670 L744 674 L762 673 L760 680 L744 679 L740 682 L736 679 L720 680Z" fill="#808080" opacity="0.7"/>
<!-- hat -->
<path d="M705.6 644.4 L710 639 L718 632.5 L728 627 L740 623.5 L753.2 622.5 L763 624.5 L769 628.5 L771 633 L770 639.3 L768.5 643 L741.5 643.5 L718 646 L709.3 646.6Z" fill="url(#brHat)"/>
<path d="M705.6 644.4 L718 642.5 L741.5 641.5 L768.5 641 L768.5 643.5 L741.5 644.5 L718 647 L709.3 647.5Z" fill="#404040"/>
<g fill="none" stroke="#1010F0" stroke-width="1.3"><path d="M764.9 749.5L802.5 741.9L765.1 733.5M765.0 741.5L802.5 741.9"/><ellipse cx="765.0" cy="741.5" rx="2.4" ry="8.0" transform="rotate(0.7 765.0 741.5)"/><path d="M818.8 749.7L847.0 740.7L818.2 733.7M818.5 741.7L847.0 740.7"/><ellipse cx="818.5" cy="741.7" rx="2.4" ry="8.0" transform="rotate(-2.1 818.5 741.7)"/><path d="M862.3 748.2L884.3 739.5L861.7 732.2M862.0 740.2L884.3 739.5"/><ellipse cx="862.0" cy="740.2" rx="2.4" ry="8.0" transform="rotate(-1.8 862.0 740.2)"/><path d="M900.6 746.8L967.3 735.9L899.9 730.9M900.3 738.8L967.3 735.9"/><ellipse cx="900.3" cy="738.8" rx="2.4" ry="8.0" transform="rotate(-2.6 900.3 738.8)"/><circle cx="758.0" cy="741.4" r="7.0"/><ellipse cx="758.0" cy="741.4" rx="3.1" ry="7.0"/><path d="M758.0 734.4V748.4"/><circle cx="810.5" cy="742.0" r="8.0"/><ellipse cx="810.5" cy="742.0" rx="3.6" ry="8.0"/><path d="M810.5 734.0V750.0"/><circle cx="854.5" cy="740.4" r="7.5"/><ellipse cx="854.5" cy="740.4" rx="3.4" ry="7.5"/><path d="M854.5 732.9V747.9"/><circle cx="892.3" cy="739.2" r="8.0"/><ellipse cx="892.3" cy="739.2" rx="3.6" ry="8.0"/><path d="M892.3 731.2V747.2"/><circle cx="975.3" cy="735.5" r="8.0"/><ellipse cx="975.3" cy="735.5" rx="3.6" ry="8.0"/><path d="M975.3 727.5V743.5"/><path d="M718.9 734.5L677.9 748.8L721.3 750.4M720.1 742.4L677.9 748.8"/><ellipse cx="720.1" cy="742.4" rx="2.4" ry="8.0" transform="rotate(171.4 720.1 742.4)"/><path d="M661.5 742.6L627.5 753.0L662.6 758.5M662.0 750.6L627.5 753.0"/><ellipse cx="662.0" cy="750.6" rx="2.4" ry="8.0" transform="rotate(176.0 662.0 750.6)"/><path d="M611.9 746.1L581.0 756.4L613.1 762.0M612.5 754.1L581.0 756.4"/><ellipse cx="612.5" cy="754.1" rx="2.4" ry="8.0" transform="rotate(175.7 612.5 754.1)"/><path d="M564.7 749.3L556.0 757.7L565.3 765.3M565.0 757.3L556.0 757.7"/><ellipse cx="565.0" cy="757.3" rx="2.4" ry="8.0" transform="rotate(177.7 565.0 757.3)"/><circle cx="727.0" cy="741.4" r="7.0"/><ellipse cx="727.0" cy="741.4" rx="3.1" ry="7.0"/><path d="M727.0 734.4V748.4"/><circle cx="670.0" cy="750.0" r="8.0"/><ellipse cx="670.0" cy="750.0" rx="3.6" ry="8.0"/><path d="M670.0 742.0V758.0"/><circle cx="620.0" cy="753.5" r="7.5"/><ellipse cx="620.0" cy="753.5" rx="3.4" ry="7.5"/><path d="M620.0 746.0V761.0"/><circle cx="573.0" cy="757.0" r="8.0"/><ellipse cx="573.0" cy="757.0" rx="3.6" ry="8.0"/><path d="M573.0 749.0V765.0"/><circle cx="548.0" cy="758.0" r="8.0"/><ellipse cx="548.0" cy="758.0" rx="3.6" ry="8.0"/><path d="M548.0 750.0V766.0"/><path d="M718.3 735.3L701.0 747.8L722.1 750.8M720.2 743.1L701.0 747.8"/><ellipse cx="720.2" cy="743.1" rx="2.4" ry="8.0" transform="rotate(166.3 720.2 743.1)"/><path d="M764.8 749.5L789.0 742.0L765.1 733.5M765.0 741.5L789.0 742.0"/><ellipse cx="765.0" cy="741.5" rx="2.4" ry="8.0" transform="rotate(1.1 765.0 741.5)"/><circle cx="741.5" cy="741.4" r="9.0"/><ellipse cx="741.5" cy="741.4" rx="4.0" ry="9.0"/><path d="M741.5 732.4V750.4"/><circle cx="741.5" cy="741.4" r="6"/><path d="M753.7 827.0L745.8 812.5L738.7 827.4M746.2 827.2L745.8 812.5"/><ellipse cx="746.2" cy="827.2" rx="2.2" ry="7.5" transform="rotate(-91.5 746.2 827.2)"/><path d="M752.7 796.1L744.4 782.6L737.7 796.9M745.2 796.5L744.4 782.6"/><ellipse cx="745.2" cy="796.5" rx="2.2" ry="7.5" transform="rotate(-93.1 745.2 796.5)"/><path d="M750.9 766.1L742.2 750.4L735.9 767.2M743.4 766.6L742.2 750.4"/><ellipse cx="743.4" cy="766.6" rx="2.2" ry="7.5" transform="rotate(-94.3 743.4 766.6)"/><circle cx="746.4" cy="835.2" r="8.0"/><ellipse cx="746.4" cy="835.2" rx="8.0" ry="3.6"/><path d="M738.4 835.2H754.4"/><circle cx="745.6" cy="804.5" r="8.0"/><ellipse cx="745.6" cy="804.5" rx="8.0" ry="3.6"/><path d="M737.6 804.5H753.6"/><circle cx="744.0" cy="774.6" r="8.0"/><ellipse cx="744.0" cy="774.6" rx="8.0" ry="3.6"/><path d="M736.0 774.6H752.0"/><path d="M749.4 730.6L740.7 717.0L733.5 731.5M741.4 731.0L740.7 717.0"/><ellipse cx="741.4" cy="731.0" rx="2.4" ry="8.0" transform="rotate(-93.2 741.4 731.0)"/><circle cx="740.6" cy="707.4" r="9.0"/><ellipse cx="740.6" cy="707.4" rx="9.0" ry="4.0"/><path d="M731.6 707.4H749.6"/><circle cx="740.6" cy="695.8" r="9.0"/><ellipse cx="740.6" cy="695.8" rx="9.0" ry="4.0"/><path d="M731.6 695.8H749.6"/><path d="M740.6 686V750M746.4 843V852"/></g></g></svg><div class="a" style="left:1080px;top:66px;width:198px;height:864px;border:1px solid #919B9C;background:linear-gradient(to bottom,#F2F1EA 0,#EDEBDF 30%,#ECE9D8 100%)"></div>
<div class="a" style="left:1079px;top:46px;width:1px;height:886px;background:#FFFFFF"></div>
<div class="tab" style="left:1126px;width:43px">Groups</div>
<div class="tab" style="left:1170px;width:53px">Materials</div>
<div class="tab" style="left:1224px;width:40px">Joints</div>
<div class="tab" style="left:1080px;top:46px;width:46px;height:21px;background:#FCFCFE;border-top:3px solid #F4B740;border-radius:3px 3px 0 0;line-height:14px;padding-top:0">Model</div>
<div class="gb" style="left:1084px;top:76px;width:184px;height:244px"></div>
<div class="gbl" style="left:1092px;top:70px;background:#F1F0E8">Tools</div>
<div class="btn" style="left:1095px;top:91px;width:78px">Select</div>
<div class="btn" style="left:1180px;top:91px;width:78px">Move</div>
<div class="btn" style="left:1095px;top:111px;width:78px">Rotate</div>
<div class="btn g" style="left:1180px;top:111px;width:78px">Scale</div>
<div class="btn" style="left:1095px;top:136px;width:78px">Vertex</div>
<div class="btn" style="left:1180px;top:136px;width:78px">Face</div>
<div class="btn" style="left:1095px;top:156px;width:78px">Sphere</div>
<div class="btn" style="left:1180px;top:156px;width:78px">GeoSphere</div>
<div class="btn" style="left:1095px;top:176px;width:78px">Box</div>
<div class="btn" style="left:1180px;top:176px;width:78px">Cylinder</div>
<div class="btn" style="left:1095px;top:196px;width:78px">Plane</div>
<div class="btn" style="left:1095px;top:221px;width:78px">Extrude</div>
<div class="btn" style="left:1180px;top:221px;width:78px">Joint</div>
<div class="btn n" style="left:1095px;top:251px;width:78px">Comment</div>
<div class="chk" style="left:1094px;top:274px"><svg class="a" style="left:1px;top:1px" width="10" height="10"><path d="M2 4.5 L4 7 L9 2" stroke="#21A121" stroke-width="2" fill="none"/></svg></div>
<div class="lbl" style="left:1110px;top:274px">Redraw All Viewports</div>
<div class="chk" style="left:1094px;top:294px"></div>
<div class="lbl" style="left:1110px;top:294px">Auto Tool</div>
<div class="gb" style="left:1084px;top:332px;width:184px;height:120px"></div>
<div class="gbl" style="left:1091px;top:326px;background:#EDEADC">Scale Options</div>
<div class="rad" style="left:1094px;top:344px"><div class="a" style="left:3px;top:3px;width:5px;height:5px;border-radius:50%;background:#3FAE3F"></div></div>
<div class="lbl" style="left:1110px;top:344px">Center Of Mass</div>
<div class="rad" style="left:1094px;top:364px"></div>
<div class="lbl" style="left:1110px;top:364px">Origin</div>
<div class="rad" style="left:1094px;top:384px"></div>
<div class="lbl" style="left:1110px;top:384px">User Point</div>
<div class="edit" style="left:1094px;top:402px;width:35px;height:18px">1.0</div>
<div class="edit" style="left:1134px;top:402px;width:35px;height:18px">1.0</div>
<div class="edit" style="left:1174px;top:402px;width:35px;height:18px">1.0</div>
<div class="btn n" style="left:1215px;top:403px;width:43px">Scale</div>
<div class="btn g" style="left:1095px;top:426px;width:33px">X</div>
<div class="btn g" style="left:1135px;top:426px;width:33px">Y</div>
<div class="btn g" style="left:1175px;top:426px;width:33px">Z</div>
<div class="btn" style="left:1215px;top:426px;width:33px">U</div>
<!-- log box -->
<div class="a" style="left:0;top:852px;width:1081px;height:80px;border-top:1px solid #808080;border-left:1px solid #A0A0A0;border-right:1px solid #808080;border-bottom:1px solid #808080;background:#fff"></div>
<div class="a" style="left:3px;top:856px;line-height:13px;font-size:11px;color:#000">Error loading texture "radio.bmp": could not open file [1290].<br>Error loading texture "GIGN_DMBASE2.bmp": could not open file [1290].<br>Error loading texture "GIGN_DMBASE2.bmp": could not open file [1290].</div>
<!-- h scrollbar -->
<div class="a" style="left:1px;top:914px;width:1061px;height:16px;background:linear-gradient(to bottom,#F2F1EA 0,#FEFEFB 50%,#F3F2EC 100%)"></div>
<div class="a" style="left:3px;top:914px;width:15px;height:15px;border:1px solid #E8E6DC;border-radius:2px;background:#EEEDE5"><svg class="a" style="left:3px;top:3px" width="8" height="8"><path d="M5 1 L2 4 L5 7" stroke="#B8B6AC" stroke-width="1.6" fill="none"/></svg></div>
<div class="a" style="left:1045px;top:914px;width:15px;height:15px;border:1px solid #E8E6DC;border-radius:2px;background:#EEEDE5"><svg class="a" style="left:4px;top:3px" width="8" height="8"><path d="M2 1 L5 4 L2 7" stroke="#B8B6AC" stroke-width="1.6" fill="none"/></svg></div>
<div class="a" style="left:1062px;top:914px;width:17px;height:17px;background:#ECE9D8"></div>
<!-- v scrollbar -->
<div class="a" style="left:1062px;top:853px;width:17px;height:61px;background:linear-gradient(to right,#F3F3EE 0,#FEFEFB 60%,#F0F0EA 100%)"></div>
<div class="a" style="left:1063px;top:855px;width:14px;height:14px;border:1px solid #C2D2F4;border-radius:2px;background:linear-gradient(135deg,#E0EAFE 0,#B8CCF6 100%)"><svg class="a" style="left:2px;top:3px" width="10" height="8"><path d="M1.5 6 L5 2.5 L8.5 6" stroke="#2C4A86" stroke-width="2" fill="none"/></svg></div>
<div class="a" style="left:1063px;top:876px;width:14px;height:17px;border:1px solid #C2D2F4;border-radius:2px;background:linear-gradient(135deg,#E0EAFE 0,#B8CCF6 100%)"><svg class="a" style="left:3px;top:4px" width="8" height="8"><path d="M1 1.5H7M1 3.5H7M1 5.5H7" stroke="#9AB0E4" stroke-width="1"/></svg></div>
<div class="a" style="left:1063px;top:896px;width:14px;height:16px;border:1px solid #C2D2F4;border-radius:2px;background:linear-gradient(135deg,#E0EAFE 0,#B8CCF6 100%)"><svg class="a" style="left:2px;top:4px" width="10" height="8"><path d="M1.5 2 L5 5.5 L8.5 2" stroke="#2C4A86" stroke-width="2" fill="none"/></svg></div>
<!-- slider -->
<div class="a" style="left:0;top:932px;width:1px;height:42px;background:#C8C4B4"></div>
<div class="a" style="left:20px;top:943px;width:1049px;height:1px;background:#A4A294"></div>
<div class="a" style="left:20px;top:944px;width:1049px;height:2px;background:#FBFBF6"></div>
<svg class="a" style="left:8px;top:935px" width="14" height="22"><path d="M1.5 1.5H11.5V14L6.5 19.5L1.5 14Z" fill="#F8F8F4" stroke="#C8C6BA" stroke-width="1"/></svg>
<svg class="a" style="left:0;top:955px" width="1080" height="10"><path id="ticks" d="M14.5 2V7M51.5 2V7M87.5 2V7M123.5 2V7M159.5 2V7M196.5 2V7M232.5 2V7M268.5 2V7M304.5 2V7M341.5 2V7M377.5 2V7M413.5 2V7M449.5 2V7M486.5 2V7M522.5 2V7M558.5 2V7M594.5 2V7M630.5 2V7M667.5 2V7M703.5 2V7M739.5 2V7M775.5 2V7M812.5 2V7M848.5 2V7M884.5 2V7M920.5 2V7M957.5 2V7M993.5 2V7M1029.5 2V7M1065.5 2V7" stroke="#9A9888" stroke-width="1"/></svg>
<!-- status bar -->
<div class="a" style="left:0;top:973px;width:1180px;height:1px;background:#FFFFFF"></div>
<div class="a" style="left:1px;top:974px;white-space:nowrap">x -10.309 y 63.007 z 0.000</div>
<div class="a" style="left:200px;top:974px">Ready.</div>
<!-- nav buttons -->
<div class="a" style="left:1080px;top:935px;width:16px;height:15px;border:1px solid #C8C6B8;border-radius:2px;background:#F2F0E8"><svg class="a" style="left:0;top:0" width="15" height="14"><path d="M3.5 3V12M5.5 3V12M11.5 3L7.5 7.5L11.5 12" stroke="#A8A698" stroke-width="1" fill="none"/></svg></div>
<div class="a" style="left:1100px;top:935px;width:16px;height:15px;border:1px solid #C8C6B8;border-radius:2px;background:#F2F0E8"><svg class="a" style="left:0;top:0" width="15" height="14"><path d="M4.5 3V12M10.5 3L6.5 7.5L10.5 12" stroke="#A8A698" stroke-width="1" fill="none"/></svg></div>
<div class="a" style="left:1120px;top:935px;width:16px;height:15px;border:1px solid #C8C6B8;border-radius:2px;background:#F2F0E8"><svg class="a" style="left:0;top:0" width="15" height="14"><path d="M7.5 3L3.5 7.5L7.5 12M11.5 3L7.5 7.5L11.5 12" stroke="#A8A698" stroke-width="1" fill="none"/></svg></div>
<div class="a" style="left:1140px;top:935px;width:16px;height:15px;border:1px solid #C8C6B8;border-radius:2px;background:#F2F0E8"><svg class="a" style="left:0;top:0" width="15" height="14"><path d="M9.5 3L5.5 7.5L9.5 12" stroke="#A8A698" stroke-width="1" fill="none"/></svg></div>
<div class="a" style="left:1160px;top:935px;width:16px;height:15px;border:1px solid #C8C6B8;border-radius:2px;background:#F2F0E8"><svg class="a" style="left:0;top:0" width="15" height="14"><path d="M5.5 3L9.5 7.5L5.5 12" stroke="#A8A698" stroke-width="1" fill="none"/></svg></div>
<div class="a" style="left:1180px;top:935px;width:16px;height:15px;border:1px solid #C8C6B8;border-radius:2px;background:#F2F0E8"><svg class="a" style="left:0;top:0" width="15" height="14"><path d="M3.5 3L7.5 7.5L3.5 12M7.5 3L11.5 7.5L7.5 12" stroke="#A8A698" stroke-width="1" fill="none"/></svg></div>
<div class="a" style="left:1200px;top:935px;width:16px;height:15px;border:1px solid #C8C6B8;border-radius:2px;background:#F2F0E8"><svg class="a" style="left:0;top:0" width="15" height="14"><path d="M3.5 3L7.5 7.5L3.5 12M10.5 3V12" stroke="#A8A698" stroke-width="1" fill="none"/></svg></div>
<div class="a" style="left:1220px;top:935px;width:16px;height:15px;border:1px solid #C8C6B8;border-radius:2px;background:#F2F0E8"><svg class="a" style="left:0;top:0" width="15" height="14"><path d="M3.5 3L7.5 7.5L3.5 12M9.5 3V12M11.5 3V12" stroke="#A8A698" stroke-width="1" fill="none"/></svg></div>

<div class="a" style="left:1079px;top:953px;width:38px;height:20px;border:1px solid #B4B2A4;color:#A8A698;padding:2px 0 0 3px">1.0</div>
<div class="a" style="left:1119px;top:953px;width:38px;height:20px;border:1px solid #B4B2A4;color:#A8A698;padding:2px 0 0 3px">30</div>
<div class="a" style="left:1240px;top:935px;width:36px;height:35px;border:1px solid #1E3F7A;border-radius:4px;background:linear-gradient(to bottom,#FFFFFF 0,#F6F6F2 60%,#E4E6EA 100%);text-align:center;line-height:33px;box-shadow:inset 0 0 0 2px #B4CCF6,inset 0 -3px 0 #98B4EC">Anim</div>
<div class="a" style="left:1180px;top:974px;width:100px;height:20px;border:1px solid #A8A698;border-radius:3px;background:#fff"></div>
<div class="a" style="left:0;top:994px;width:1280px;height:30px;background:linear-gradient(to bottom,#3168D5 0,#4D8CF8 1px,#2D6EE8 3px,#245EDC 6px,#2258D8 50%,#1F52C8 90%,#1941A8 100%)"></div>
<div class="a" style="left:0;top:994px;width:86px;height:30px;border-radius:0 12px 12px 0;background:linear-gradient(to bottom,#3C8F3C 0,#5EB45E 2px,#3F9F3F 6px,#379537 50%,#2F8A2F 80%,#2A6E2A 100%);box-shadow:inset -2px 0 3px #1E5A1E"></div>
<svg class="a" style="left:10px;top:1001px" width="16" height="16" viewBox="0 0 16 16"><path d="M2 2 Q5 1 7.5 2 L7 7 Q4.5 6 1.5 7Z" fill="#E86A2A"/><path d="M8.5 2.5 Q11 3.5 14.5 2.5 L14 7.5 Q11 8.5 8 7.5Z" fill="#6CBF3A"/><path d="M1.3 8 Q4 7 7 8 L6.5 13 Q4 12 1 13Z" fill="#3A8CE8"/><path d="M8 8.5 Q11 9.5 14 8.5 L13.5 13.5 Q10.5 14.5 7.5 13.5Z" fill="#F2C320"/></svg>
<div class="a" style="left:26px;top:999px;color:#fff;font-weight:bold;font-style:italic;font-size:17px;letter-spacing:-0.3px;text-shadow:1px 1px 1px #1A4A1A">пуск</div>
<!-- quick launch -->
<svg class="a" style="left:99px;top:1001px" width="18" height="18"><rect x="2" y="3" width="7" height="8" fill="#C8C8C8"/><rect x="7" y="2" width="9" height="9" rx="2" fill="#F4B888"/><path d="M8 14 H12 M10 12 V16" stroke="#58B8F8" stroke-width="1.5"/></svg>
<svg class="a" style="left:121px;top:1001px" width="18" height="18"><ellipse cx="9" cy="9" rx="5" ry="6" fill="none" stroke="#D8141C" stroke-width="3.8"/></svg>
<svg class="a" style="left:144px;top:1001px" width="18" height="18"><rect x="1" y="1" width="16" height="16" fill="#5A3A2A" stroke="#B89878"/><path d="M8 3V15M10 3V15" stroke="#E8C8A8" stroke-width="1.5"/></svg>
<div class="a" style="left:172px;top:996px;color:#fff;font-size:10px;font-weight:bold">»</div>
<div class="a" style="left:189px;top:998px;width:153px;height:22px;border-radius:3px;background:linear-gradient(to bottom,#5A9AFA 0,#3F84F4 3px,#3A80F2 50%,#3476E8 100%);box-shadow:inset -1px -1px 1px #2A5AC8, inset 1px 1px 1px #78AEFF"></div><svg class="a" style="left:199px;top:1001px" width="16" height="16"><ellipse cx="8" cy="8" rx="5" ry="5.8" fill="none" stroke="#D8141C" stroke-width="3.6"/></svg><div class="a" style="left:218px;top:1003px;color:#fff;font-size:11px;white-space:nowrap;letter-spacing:0">:: Бешеный народ :...</div>
<div class="a" style="left:344px;top:998px;width:153px;height:22px;border-radius:3px;background:linear-gradient(to bottom,#5A9AFA 0,#3F84F4 3px,#3A80F2 50%,#3476E8 100%);box-shadow:inset -1px -1px 1px #2A5AC8, inset 1px 1px 1px #78AEFF"></div><svg class="a" style="left:354px;top:1001px" width="16" height="16"><rect x="1" y="3" width="14" height="11" fill="#A8D048" stroke="#3A6A10"/><rect x="5" y="1" width="6" height="3" fill="#F8E868" stroke="#3A6A10"/><path d="M3 7H13M3 10H13" stroke="#3A6A10"/></svg><div class="a" style="left:373px;top:1003px;color:#fff;font-size:11px;white-space:nowrap;letter-spacing:0">[572-996-186] - Ок...</div>
<div class="a" style="left:499px;top:998px;width:153px;height:22px;border-radius:3px;background:linear-gradient(to bottom,#5A9AFA 0,#3F84F4 3px,#3A80F2 50%,#3476E8 100%);box-shadow:inset -1px -1px 1px #2A5AC8, inset 1px 1px 1px #78AEFF"></div><svg class="a" style="left:509px;top:1001px" width="16" height="16"><path d="M2 2 L6 1 L6 15 L2 15Z" fill="#E8C060"/><path d="M6 1 L13 3 L13 15 L6 15Z" fill="#F8DC88"/><path d="M6 1 L6 15" stroke="#B88A30"/></svg><div class="a" style="left:528px;top:1003px;color:#fff;font-size:11px;white-space:nowrap;letter-spacing:0">C:\Documents and S...</div>
<div class="a" style="left:654px;top:998px;width:153px;height:22px;border-radius:3px;background:linear-gradient(to bottom,#5A9AFA 0,#3F84F4 3px,#3A80F2 50%,#3476E8 100%);box-shadow:inset -1px -1px 1px #2A5AC8, inset 1px 1px 1px #78AEFF"></div><svg class="a" style="left:664px;top:1001px" width="16" height="16"><path d="M2 2 L6 1 L6 15 L2 15Z" fill="#E8C060"/><path d="M6 1 L13 3 L13 15 L6 15Z" fill="#F8DC88"/><path d="M6 1 L6 15" stroke="#B88A30"/></svg><div class="a" style="left:683px;top:1003px;color:#fff;font-size:11px;white-space:nowrap;letter-spacing:0">C:\Documents and S...</div>
<div class="a" style="left:809px;top:998px;width:153px;height:22px;border-radius:3px;background:linear-gradient(to bottom,#5A9AFA 0,#3F84F4 3px,#3A80F2 50%,#3476E8 100%);box-shadow:inset -1px -1px 1px #2A5AC8, inset 1px 1px 1px #78AEFF"></div><svg class="a" style="left:819px;top:1001px" width="16" height="16"><path d="M2 2 L6 1 L6 15 L2 15Z" fill="#E8C060"/><path d="M6 1 L13 3 L13 15 L6 15Z" fill="#F8DC88"/><path d="M6 1 L6 15" stroke="#B88A30"/></svg><div class="a" style="left:838px;top:1003px;color:#fff;font-size:11px;white-space:nowrap;letter-spacing:0">D:\Games\Counter-s...</div>
<div class="a" style="left:965px;top:998px;width:153px;height:22px;border-radius:3px;background:linear-gradient(to bottom,#1E48B0 0,#1A44B0 50%,#2050C0 100%);box-shadow:inset 1px 1px 2px #10307A"></div><svg class="a" style="left:975px;top:1001px" width="16" height="16"><path d="M2 5 L8 2 L14 4.5 L14 11 L8 14 L2 11.5Z" fill="#F6F6FA" stroke="#B0B0C0" stroke-width="0.8"/><path d="M2 5 L8 8 L14 4.5 M8 8 L8 14" fill="none" stroke="#C8C8D8" stroke-width="0.8"/><path d="M9 10 L12 8.5" stroke="#D06060" stroke-width="1.2"/></svg><div class="a" style="left:994px;top:1003px;color:#fff;font-size:11px;white-space:nowrap;letter-spacing:0">MilkShape 3D 1.7.8 ...</div>

<!-- tray -->
<div class="a" style="left:1133px;top:994px;width:147px;height:30px;border-left:1px solid #1042AF;background:linear-gradient(to bottom,#0C59B9 0,#18BBFF 1px,#13A8F2 3px,#0F9CEC 6px,#0F98EA 50%,#0E8BE0 90%,#0B74C8 100%)"></div>
<div class="a" style="left:1125px;top:1000px;width:17px;height:17px;border-radius:50%;background:radial-gradient(circle at 40% 35%,#9FD0FF 0,#3E8EF0 60%,#2060D0 100%);border:1px solid #78B0F0"><svg class="a" style="left:3px;top:3px" width="10" height="10"><path d="M6.5 1.5 L3 5 L6.5 8.5" stroke="#fff" stroke-width="2" fill="none"/></svg></div>
<svg class="a" style="left:1144px;top:1001px" width="16" height="16"><rect x="0.5" y="1.5" width="14" height="13" fill="#F8D020" stroke="#8A6A10"/><path d="M3 8 L6 11 L13 3" stroke="#E02020" stroke-width="2" fill="none"/></svg>
<svg class="a" style="left:1161px;top:1000px" width="17" height="17"><circle cx="8.5" cy="9" r="6" fill="#F4E030" stroke="#5A9A20" stroke-width="2"/><circle cx="6.5" cy="8" r="1" fill="#333"/><circle cx="10.5" cy="8" r="1" fill="#333"/></svg>
<svg class="a" style="left:1181px;top:1001px" width="17" height="16"><rect x="6" y="1" width="9" height="8" fill="#8A8A8A" stroke="#555"/><rect x="1" y="6" width="9" height="8" fill="#B0B0B0" stroke="#555"/></svg>
<svg class="a" style="left:1198px;top:1000px" width="17" height="17"><circle cx="8.5" cy="8.5" r="7" fill="#1A7A2A" stroke="#E8E8E8" stroke-width="1.2"/><circle cx="8.5" cy="8.5" r="3.5" fill="#fff"/><circle cx="8.5" cy="8.5" r="2" fill="#2A9A3A"/></svg>
<svg class="a" style="left:1216px;top:1002px" width="16" height="14"><rect x="1" y="1" width="14" height="4" fill="#F8F8F8"/><rect x="1" y="5" width="14" height="4" fill="#2A4AD8"/><rect x="1" y="9" width="14" height="4" fill="#E02A2A"/></svg>
<div class="a" style="left:1238px;top:1002px;color:#fff;font-size:11px;letter-spacing:0">22:48</div>
</body></html>
